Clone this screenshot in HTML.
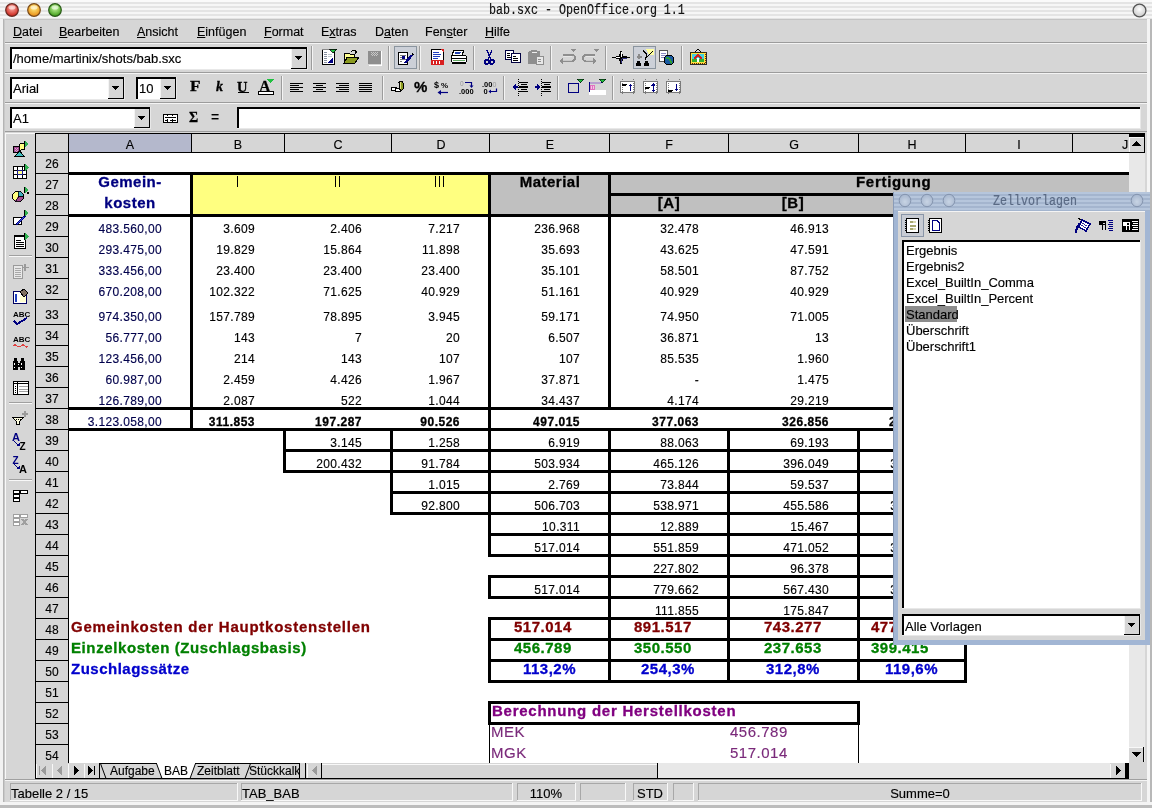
<!DOCTYPE html>
<html><head><meta charset="utf-8"><style>
html,body{margin:0;padding:0;width:1152px;height:808px;overflow:hidden;background:#d6d6d6}
body>div,body>svg{position:absolute}
.t{white-space:pre;line-height:normal;will-change:transform;-webkit-text-stroke:0.15px currentColor}
.t[style*="font-weight:bold"]{-webkit-text-stroke:0.3px currentColor}
u{text-decoration:underline;text-underline-offset:1px}
</style></head><body>
<div style="left:0px;top:0px;width:1152px;height:808px;background:#d6d6d6"></div>
<div style="left:0px;top:0px;width:1152px;height:19px;background:repeating-linear-gradient(to bottom,#f6f6f6 0px,#f6f6f6 2px,#e4e4e4 2px,#e4e4e4 4px)"></div>
<div style="left:0px;top:0px;width:1152px;height:2px;background:#fafafa"></div>
<div style="left:0px;top:19px;width:1152px;height:1px;background:#c4c4c4"></div>
<div style="left:0px;top:19px;width:3px;height:789px;background:#f2f2f2"></div>
<div style="left:3px;top:19px;width:1px;height:789px;background:#b4b4b4"></div>
<div style="left:4px;top:19px;width:1px;height:789px;background:#c8c8c8"></div>
<div style="left:1147px;top:19px;width:3px;height:789px;background:#f4f4f4"></div>
<div style="left:1150px;top:19px;width:2px;height:789px;background:#b8b8b8"></div>
<div style="left:0px;top:802px;width:1152px;height:3px;background:#f4f4f4"></div>
<div style="left:0px;top:805px;width:1152px;height:3px;background:#bcbcbc"></div>
<div class="t" style="left:489px;top:4px;font-size:11.67px;font-weight:normal;color:#111;font-family:'Liberation Mono';transform:scaleY(1.18);transform-origin:0 11px">bab.sxc - OpenOffice.org 1.1</div>
<svg style="position:absolute;left:4px;top:2px;" width="16" height="16" viewBox="0 0 16 16"><defs><radialGradient id="g12" cx="50%" cy="35%" r="65%"><stop offset="0%" stop-color="#ffb0a8"/><stop offset="100%" stop-color="#c81e14"/></radialGradient></defs><circle cx="8" cy="8" r="6.3" fill="url(#g12)" stroke="#6a2a22" stroke-width="1.2"/><ellipse cx="8" cy="5.5" rx="3.5" ry="2" fill="#fff" opacity="0.55"/></svg>
<svg style="position:absolute;left:26px;top:2px;" width="16" height="16" viewBox="0 0 16 16"><defs><radialGradient id="g34" cx="50%" cy="35%" r="65%"><stop offset="0%" stop-color="#ffee80"/><stop offset="100%" stop-color="#e88a10"/></radialGradient></defs><circle cx="8" cy="8" r="6.3" fill="url(#g34)" stroke="#7a4a18" stroke-width="1.2"/><ellipse cx="8" cy="5.5" rx="3.5" ry="2" fill="#fff" opacity="0.55"/></svg>
<svg style="position:absolute;left:47px;top:2px;" width="16" height="16" viewBox="0 0 16 16"><defs><radialGradient id="g55" cx="50%" cy="35%" r="65%"><stop offset="0%" stop-color="#c8f8a0"/><stop offset="100%" stop-color="#3a9a14"/></radialGradient></defs><circle cx="8" cy="8" r="6.3" fill="url(#g55)" stroke="#2a5a18" stroke-width="1.2"/><ellipse cx="8" cy="5.5" rx="3.5" ry="2" fill="#fff" opacity="0.55"/></svg>
<svg style="position:absolute;left:1131px;top:2px;" width="17" height="17" viewBox="0 0 17 17"><defs><radialGradient id="gw" cx="50%" cy="40%" r="60%"><stop offset="0%" stop-color="#ffffff"/><stop offset="100%" stop-color="#c8c8c8"/></radialGradient></defs><circle cx="8.5" cy="8.5" r="6.4" fill="url(#gw)" stroke="#555" stroke-width="1.3"/></svg>
<div class="t" style="left:13px;top:25px;font-size:12.5px;font-weight:normal;color:#000;font-family:'Liberation Sans';"><u>D</u>atei</div>
<div class="t" style="left:59px;top:25px;font-size:12.5px;font-weight:normal;color:#000;font-family:'Liberation Sans';"><u>B</u>earbeiten</div>
<div class="t" style="left:137px;top:25px;font-size:12.5px;font-weight:normal;color:#000;font-family:'Liberation Sans';"><u>A</u>nsicht</div>
<div class="t" style="left:197px;top:25px;font-size:12.5px;font-weight:normal;color:#000;font-family:'Liberation Sans';"><u>E</u>infügen</div>
<div class="t" style="left:264px;top:25px;font-size:12.5px;font-weight:normal;color:#000;font-family:'Liberation Sans';"><u>F</u>ormat</div>
<div class="t" style="left:321px;top:25px;font-size:12.5px;font-weight:normal;color:#000;font-family:'Liberation Sans';">E<u>x</u>tras</div>
<div class="t" style="left:375px;top:25px;font-size:12.5px;font-weight:normal;color:#000;font-family:'Liberation Sans';">D<u>a</u>ten</div>
<div class="t" style="left:425px;top:25px;font-size:12.5px;font-weight:normal;color:#000;font-family:'Liberation Sans';">Fen<u>s</u>ter</div>
<div class="t" style="left:485px;top:25px;font-size:12.5px;font-weight:normal;color:#000;font-family:'Liberation Sans';"><u>H</u>ilfe</div>
<div style="left:5px;top:42px;width:1142px;height:1px;background:#9c9c9c"></div>
<div style="left:5px;top:43px;width:1142px;height:1px;background:#f4f4f4"></div>
<div style="left:5px;top:72px;width:1142px;height:1px;background:#9c9c9c"></div>
<div style="left:5px;top:73px;width:1142px;height:1px;background:#f4f4f4"></div>
<div style="left:5px;top:102px;width:1142px;height:1px;background:#9c9c9c"></div>
<div style="left:5px;top:103px;width:1142px;height:1px;background:#f4f4f4"></div>
<div style="left:5px;top:131px;width:1142px;height:1px;background:#9c9c9c"></div>
<div style="left:10px;top:47px;width:298px;height:23px;background:#fff"></div>
<div style="left:10px;top:47px;width:298px;height:2px;background:#000"></div>
<div style="left:10px;top:47px;width:2px;height:23px;background:#000"></div>
<div style="left:10px;top:69px;width:298px;height:1px;background:#e8e8e8"></div>
<div style="left:307px;top:47px;width:1px;height:23px;background:#e8e8e8"></div>
<div style="left:291px;top:49px;width:16px;height:20px;background:#d6d6d6"></div>
<div style="left:291px;top:49px;width:1px;height:20px;background:#f4f4f4"></div>
<div style="left:291px;top:68px;width:16px;height:1px;background:#000"></div>
<div style="left:306px;top:49px;width:1px;height:20px;background:#000"></div>
<svg style="position:absolute;left:295px;top:56px;" width="8" height="5" viewBox="0 0 8 5" shape-rendering="crispEdges"><path d="M0 0H7L3.5 4Z" fill="#000"/></svg>
<div class="t" style="left:13px;top:51px;font-size:13px;font-weight:normal;color:#000;font-family:'Liberation Sans';">/home/martinix/shots/bab.sxc</div>
<div style="left:311px;top:46px;width:1px;height:24px;background:#9c9c9c"></div>
<div style="left:312px;top:46px;width:1px;height:24px;background:#f4f4f4"></div>
<div style="left:388px;top:46px;width:1px;height:24px;background:#9c9c9c"></div>
<div style="left:389px;top:46px;width:1px;height:24px;background:#f4f4f4"></div>
<div style="left:419px;top:46px;width:1px;height:24px;background:#9c9c9c"></div>
<div style="left:420px;top:46px;width:1px;height:24px;background:#f4f4f4"></div>
<div style="left:473px;top:46px;width:1px;height:24px;background:#9c9c9c"></div>
<div style="left:474px;top:46px;width:1px;height:24px;background:#f4f4f4"></div>
<div style="left:550px;top:46px;width:1px;height:24px;background:#9c9c9c"></div>
<div style="left:551px;top:46px;width:1px;height:24px;background:#f4f4f4"></div>
<div style="left:605px;top:46px;width:1px;height:24px;background:#9c9c9c"></div>
<div style="left:606px;top:46px;width:1px;height:24px;background:#f4f4f4"></div>
<div style="left:681px;top:46px;width:1px;height:24px;background:#9c9c9c"></div>
<div style="left:682px;top:46px;width:1px;height:24px;background:#f4f4f4"></div>
<div style="left:10px;top:77px;width:115px;height:23px;background:#fff"></div>
<div style="left:10px;top:77px;width:115px;height:2px;background:#000"></div>
<div style="left:10px;top:77px;width:2px;height:23px;background:#000"></div>
<div style="left:10px;top:99px;width:115px;height:1px;background:#e8e8e8"></div>
<div style="left:124px;top:77px;width:1px;height:23px;background:#e8e8e8"></div>
<div style="left:108px;top:79px;width:16px;height:20px;background:#d6d6d6"></div>
<div style="left:108px;top:79px;width:1px;height:20px;background:#f4f4f4"></div>
<div style="left:108px;top:98px;width:16px;height:1px;background:#000"></div>
<div style="left:123px;top:79px;width:1px;height:20px;background:#000"></div>
<svg style="position:absolute;left:112px;top:86px;" width="8" height="5" viewBox="0 0 8 5" shape-rendering="crispEdges"><path d="M0 0H7L3.5 4Z" fill="#000"/></svg>
<div class="t" style="left:13px;top:81px;font-size:13px;font-weight:normal;color:#000;font-family:'Liberation Sans';">Arial</div>
<div style="left:136px;top:77px;width:41px;height:23px;background:#fff"></div>
<div style="left:136px;top:77px;width:41px;height:2px;background:#000"></div>
<div style="left:136px;top:77px;width:2px;height:23px;background:#000"></div>
<div style="left:136px;top:99px;width:41px;height:1px;background:#e8e8e8"></div>
<div style="left:176px;top:77px;width:1px;height:23px;background:#e8e8e8"></div>
<div style="left:160px;top:79px;width:16px;height:20px;background:#d6d6d6"></div>
<div style="left:160px;top:79px;width:1px;height:20px;background:#f4f4f4"></div>
<div style="left:160px;top:98px;width:16px;height:1px;background:#000"></div>
<div style="left:175px;top:79px;width:1px;height:20px;background:#000"></div>
<svg style="position:absolute;left:164px;top:86px;" width="8" height="5" viewBox="0 0 8 5" shape-rendering="crispEdges"><path d="M0 0H7L3.5 4Z" fill="#000"/></svg>
<div class="t" style="left:139px;top:81px;font-size:13px;font-weight:normal;color:#000;font-family:'Liberation Sans';">10</div>
<div style="left:281px;top:76px;width:1px;height:24px;background:#9c9c9c"></div>
<div style="left:282px;top:76px;width:1px;height:24px;background:#f4f4f4"></div>
<div style="left:382px;top:76px;width:1px;height:24px;background:#9c9c9c"></div>
<div style="left:383px;top:76px;width:1px;height:24px;background:#f4f4f4"></div>
<div style="left:503px;top:76px;width:1px;height:24px;background:#9c9c9c"></div>
<div style="left:504px;top:76px;width:1px;height:24px;background:#f4f4f4"></div>
<div style="left:557px;top:76px;width:1px;height:24px;background:#9c9c9c"></div>
<div style="left:558px;top:76px;width:1px;height:24px;background:#f4f4f4"></div>
<div style="left:612px;top:76px;width:1px;height:24px;background:#9c9c9c"></div>
<div style="left:613px;top:76px;width:1px;height:24px;background:#f4f4f4"></div>
<div style="left:10px;top:107px;width:141px;height:22px;background:#fff"></div>
<div style="left:10px;top:107px;width:141px;height:2px;background:#000"></div>
<div style="left:10px;top:107px;width:2px;height:22px;background:#000"></div>
<div style="left:10px;top:128px;width:141px;height:1px;background:#e8e8e8"></div>
<div style="left:150px;top:107px;width:1px;height:22px;background:#e8e8e8"></div>
<div style="left:134px;top:109px;width:16px;height:19px;background:#d6d6d6"></div>
<div style="left:134px;top:109px;width:1px;height:19px;background:#f4f4f4"></div>
<div style="left:134px;top:127px;width:16px;height:1px;background:#000"></div>
<div style="left:149px;top:109px;width:1px;height:19px;background:#000"></div>
<svg style="position:absolute;left:138px;top:116px;" width="8" height="5" viewBox="0 0 8 5" shape-rendering="crispEdges"><path d="M0 0H7L3.5 4Z" fill="#000"/></svg>
<div class="t" style="left:13px;top:111px;font-size:13px;font-weight:normal;color:#000;font-family:'Liberation Sans';">A1</div>
<div style="left:237px;top:107px;width:904px;height:22px;background:#fff"></div>
<div style="left:237px;top:107px;width:904px;height:2px;background:#000"></div>
<div style="left:237px;top:107px;width:2px;height:22px;background:#000"></div>
<div style="left:237px;top:128px;width:904px;height:1px;background:#e8e8e8"></div>
<div style="left:1140px;top:107px;width:1px;height:22px;background:#e8e8e8"></div>
<div style="left:5px;top:133px;width:30px;height:646px;background:#d6d6d6"></div>
<div style="left:5px;top:133px;width:1px;height:646px;background:#f8f8f8"></div>
<div style="left:5px;top:133px;width:30px;height:1px;background:#f8f8f8"></div>
<div style="left:5px;top:779px;width:1142px;height:1px;background:#a0a0a0"></div>
<div style="left:5px;top:780px;width:1142px;height:1px;background:#f4f4f4"></div>
<div style="left:9px;top:255px;width:23px;height:1px;background:#a0a0a0"></div>
<div style="left:9px;top:256px;width:23px;height:1px;background:#f8f8f8"></div>
<div style="left:9px;top:402px;width:23px;height:1px;background:#a0a0a0"></div>
<div style="left:9px;top:403px;width:23px;height:1px;background:#f8f8f8"></div>
<div style="left:9px;top:479px;width:23px;height:1px;background:#a0a0a0"></div>
<div style="left:9px;top:480px;width:23px;height:1px;background:#f8f8f8"></div>
<div style="left:69px;top:153px;width:1060px;height:610px;background:#fff"></div>
<div style="left:35px;top:133px;width:1094px;height:20px;background:#d6d6d6"></div>
<div style="left:69px;top:134px;width:122px;height:18px;background:#b4b8cc"></div>
<div style="left:35px;top:133px;width:1110px;height:1px;background:#000"></div>
<div style="left:35px;top:152px;width:1094px;height:1px;background:#000"></div>
<div style="left:68px;top:133px;width:1px;height:20px;background:#000"></div>
<div style="left:191px;top:133px;width:1px;height:20px;background:#000"></div>
<div style="left:284px;top:133px;width:1px;height:20px;background:#000"></div>
<div style="left:391px;top:133px;width:1px;height:20px;background:#000"></div>
<div style="left:489px;top:133px;width:1px;height:20px;background:#000"></div>
<div style="left:609px;top:133px;width:1px;height:20px;background:#000"></div>
<div style="left:728px;top:133px;width:1px;height:20px;background:#000"></div>
<div style="left:858px;top:133px;width:1px;height:20px;background:#000"></div>
<div style="left:965px;top:133px;width:1px;height:20px;background:#000"></div>
<div style="left:1072px;top:133px;width:1px;height:20px;background:#000"></div>
<div class="t" style="left:-20px;top:138px;width:300px;text-align:center;font-size:12.5px;font-weight:normal;color:#000;font-family:'Liberation Sans';">A</div>
<div class="t" style="left:88px;top:138px;width:300px;text-align:center;font-size:12.5px;font-weight:normal;color:#000;font-family:'Liberation Sans';">B</div>
<div class="t" style="left:188px;top:138px;width:300px;text-align:center;font-size:12.5px;font-weight:normal;color:#000;font-family:'Liberation Sans';">C</div>
<div class="t" style="left:291px;top:138px;width:300px;text-align:center;font-size:12.5px;font-weight:normal;color:#000;font-family:'Liberation Sans';">D</div>
<div class="t" style="left:400px;top:138px;width:300px;text-align:center;font-size:12.5px;font-weight:normal;color:#000;font-family:'Liberation Sans';">E</div>
<div class="t" style="left:519px;top:138px;width:300px;text-align:center;font-size:12.5px;font-weight:normal;color:#000;font-family:'Liberation Sans';">F</div>
<div class="t" style="left:644px;top:138px;width:300px;text-align:center;font-size:12.5px;font-weight:normal;color:#000;font-family:'Liberation Sans';">G</div>
<div class="t" style="left:762px;top:138px;width:300px;text-align:center;font-size:12.5px;font-weight:normal;color:#000;font-family:'Liberation Sans';">H</div>
<div class="t" style="left:869px;top:138px;width:300px;text-align:center;font-size:12.5px;font-weight:normal;color:#000;font-family:'Liberation Sans';">I</div>
<div class="t" style="left:1122px;top:138px;font-size:12.5px;font-weight:normal;color:#000;font-family:'Liberation Sans';">J</div>
<div style="left:35px;top:153px;width:34px;height:610px;background:#d6d6d6"></div>
<div style="left:35px;top:133px;width:1px;height:630px;background:#000"></div>
<div style="left:68px;top:153px;width:1px;height:610px;background:#000"></div>
<div style="left:35px;top:173px;width:34px;height:1px;background:#000"></div>
<div style="left:35px;top:194px;width:34px;height:1px;background:#000"></div>
<div style="left:35px;top:215px;width:34px;height:1px;background:#000"></div>
<div style="left:35px;top:236px;width:34px;height:1px;background:#000"></div>
<div style="left:35px;top:257px;width:34px;height:1px;background:#000"></div>
<div style="left:35px;top:278px;width:34px;height:1px;background:#000"></div>
<div style="left:35px;top:299px;width:34px;height:1px;background:#000"></div>
<div style="left:35px;top:324px;width:34px;height:1px;background:#000"></div>
<div style="left:35px;top:345px;width:34px;height:1px;background:#000"></div>
<div style="left:35px;top:366px;width:34px;height:1px;background:#000"></div>
<div style="left:35px;top:387px;width:34px;height:1px;background:#000"></div>
<div style="left:35px;top:408px;width:34px;height:1px;background:#000"></div>
<div style="left:35px;top:429px;width:34px;height:1px;background:#000"></div>
<div style="left:35px;top:450px;width:34px;height:1px;background:#000"></div>
<div style="left:35px;top:471px;width:34px;height:1px;background:#000"></div>
<div style="left:35px;top:492px;width:34px;height:1px;background:#000"></div>
<div style="left:35px;top:513px;width:34px;height:1px;background:#000"></div>
<div style="left:35px;top:534px;width:34px;height:1px;background:#000"></div>
<div style="left:35px;top:555px;width:34px;height:1px;background:#000"></div>
<div style="left:35px;top:576px;width:34px;height:1px;background:#000"></div>
<div style="left:35px;top:597px;width:34px;height:1px;background:#000"></div>
<div style="left:35px;top:618px;width:34px;height:1px;background:#000"></div>
<div style="left:35px;top:639px;width:34px;height:1px;background:#000"></div>
<div style="left:35px;top:660px;width:34px;height:1px;background:#000"></div>
<div style="left:35px;top:681px;width:34px;height:1px;background:#000"></div>
<div style="left:35px;top:702px;width:34px;height:1px;background:#000"></div>
<div style="left:35px;top:723px;width:34px;height:1px;background:#000"></div>
<div style="left:35px;top:744px;width:34px;height:1px;background:#000"></div>
<div class="t" style="left:-98px;top:157px;width:300px;text-align:center;font-size:12px;font-weight:normal;color:#000;font-family:'Liberation Sans';">26</div>
<div class="t" style="left:-98px;top:178px;width:300px;text-align:center;font-size:12px;font-weight:normal;color:#000;font-family:'Liberation Sans';">27</div>
<div class="t" style="left:-98px;top:199px;width:300px;text-align:center;font-size:12px;font-weight:normal;color:#000;font-family:'Liberation Sans';">28</div>
<div class="t" style="left:-98px;top:220px;width:300px;text-align:center;font-size:12px;font-weight:normal;color:#000;font-family:'Liberation Sans';">29</div>
<div class="t" style="left:-98px;top:241px;width:300px;text-align:center;font-size:12px;font-weight:normal;color:#000;font-family:'Liberation Sans';">30</div>
<div class="t" style="left:-98px;top:262px;width:300px;text-align:center;font-size:12px;font-weight:normal;color:#000;font-family:'Liberation Sans';">31</div>
<div class="t" style="left:-98px;top:283px;width:300px;text-align:center;font-size:12px;font-weight:normal;color:#000;font-family:'Liberation Sans';">32</div>
<div class="t" style="left:-98px;top:308px;width:300px;text-align:center;font-size:12px;font-weight:normal;color:#000;font-family:'Liberation Sans';">33</div>
<div class="t" style="left:-98px;top:329px;width:300px;text-align:center;font-size:12px;font-weight:normal;color:#000;font-family:'Liberation Sans';">34</div>
<div class="t" style="left:-98px;top:350px;width:300px;text-align:center;font-size:12px;font-weight:normal;color:#000;font-family:'Liberation Sans';">35</div>
<div class="t" style="left:-98px;top:371px;width:300px;text-align:center;font-size:12px;font-weight:normal;color:#000;font-family:'Liberation Sans';">36</div>
<div class="t" style="left:-98px;top:392px;width:300px;text-align:center;font-size:12px;font-weight:normal;color:#000;font-family:'Liberation Sans';">37</div>
<div class="t" style="left:-98px;top:413px;width:300px;text-align:center;font-size:12px;font-weight:normal;color:#000;font-family:'Liberation Sans';">38</div>
<div class="t" style="left:-98px;top:434px;width:300px;text-align:center;font-size:12px;font-weight:normal;color:#000;font-family:'Liberation Sans';">39</div>
<div class="t" style="left:-98px;top:455px;width:300px;text-align:center;font-size:12px;font-weight:normal;color:#000;font-family:'Liberation Sans';">40</div>
<div class="t" style="left:-98px;top:476px;width:300px;text-align:center;font-size:12px;font-weight:normal;color:#000;font-family:'Liberation Sans';">41</div>
<div class="t" style="left:-98px;top:497px;width:300px;text-align:center;font-size:12px;font-weight:normal;color:#000;font-family:'Liberation Sans';">42</div>
<div class="t" style="left:-98px;top:518px;width:300px;text-align:center;font-size:12px;font-weight:normal;color:#000;font-family:'Liberation Sans';">43</div>
<div class="t" style="left:-98px;top:539px;width:300px;text-align:center;font-size:12px;font-weight:normal;color:#000;font-family:'Liberation Sans';">44</div>
<div class="t" style="left:-98px;top:560px;width:300px;text-align:center;font-size:12px;font-weight:normal;color:#000;font-family:'Liberation Sans';">45</div>
<div class="t" style="left:-98px;top:581px;width:300px;text-align:center;font-size:12px;font-weight:normal;color:#000;font-family:'Liberation Sans';">46</div>
<div class="t" style="left:-98px;top:602px;width:300px;text-align:center;font-size:12px;font-weight:normal;color:#000;font-family:'Liberation Sans';">47</div>
<div class="t" style="left:-98px;top:623px;width:300px;text-align:center;font-size:12px;font-weight:normal;color:#000;font-family:'Liberation Sans';">48</div>
<div class="t" style="left:-98px;top:644px;width:300px;text-align:center;font-size:12px;font-weight:normal;color:#000;font-family:'Liberation Sans';">49</div>
<div class="t" style="left:-98px;top:665px;width:300px;text-align:center;font-size:12px;font-weight:normal;color:#000;font-family:'Liberation Sans';">50</div>
<div class="t" style="left:-98px;top:686px;width:300px;text-align:center;font-size:12px;font-weight:normal;color:#000;font-family:'Liberation Sans';">51</div>
<div class="t" style="left:-98px;top:707px;width:300px;text-align:center;font-size:12px;font-weight:normal;color:#000;font-family:'Liberation Sans';">52</div>
<div class="t" style="left:-98px;top:728px;width:300px;text-align:center;font-size:12px;font-weight:normal;color:#000;font-family:'Liberation Sans';">53</div>
<div class="t" style="left:-98px;top:749px;width:300px;text-align:center;font-size:12px;font-weight:normal;color:#000;font-family:'Liberation Sans';">54</div>
<div style="left:1129px;top:133px;width:16px;height:630px;background:#e8e8e8"></div>
<div style="left:1129px;top:133px;width:16px;height:4px;background:#000"></div>
<div style="left:1129px;top:137px;width:15px;height:15px;background:#d6d6d6"></div>
<div style="left:1129px;top:137px;width:15px;height:1px;background:#f8f8f8"></div>
<div style="left:1129px;top:137px;width:1px;height:15px;background:#f8f8f8"></div>
<div style="left:1144px;top:133px;width:1px;height:20px;background:#000"></div>
<div style="left:1129px;top:152px;width:16px;height:1px;background:#000"></div>
<svg style="position:absolute;left:1132px;top:141px;" width="10" height="6" viewBox="0 0 10 6" shape-rendering="crispEdges"><path d="M0 5H9L4.5 0Z" fill="#000"/></svg>
<div style="left:1129px;top:747px;width:15px;height:15px;background:#d6d6d6"></div>
<div style="left:1129px;top:747px;width:15px;height:1px;background:#f8f8f8"></div>
<div style="left:1143px;top:747px;width:1px;height:16px;background:#000"></div>
<div style="left:1129px;top:762px;width:16px;height:1px;background:#000"></div>
<svg style="position:absolute;left:1132px;top:752px;" width="10" height="6" viewBox="0 0 10 6" shape-rendering="crispEdges"><path d="M0 0H9L4.5 5Z" fill="#000"/></svg>
<div style="left:192px;top:174px;width:297px;height:41px;background:#ffff80"></div>
<div style="left:490px;top:174px;width:639px;height:41px;background:#c0c0c0"></div>
<div class="t" style="left:-20px;top:173px;width:300px;text-align:center;font-size:15px;font-weight:bold;color:#000080;font-family:'Liberation Sans';letter-spacing:0.5px">Gemein-</div>
<div class="t" style="left:-20px;top:194px;width:300px;text-align:center;font-size:15px;font-weight:bold;color:#000080;font-family:'Liberation Sans';letter-spacing:0.5px">kosten</div>
<div style="left:237px;top:176px;width:1px;height:11px;background:#000"></div>
<div style="left:335px;top:176px;width:1px;height:11px;background:#000"></div>
<div style="left:339px;top:176px;width:1px;height:11px;background:#000"></div>
<div style="left:435px;top:176px;width:1px;height:11px;background:#000"></div>
<div style="left:439px;top:176px;width:1px;height:11px;background:#000"></div>
<div style="left:443px;top:176px;width:1px;height:11px;background:#000"></div>
<div class="t" style="left:400px;top:173px;width:300px;text-align:center;font-size:15px;font-weight:bold;color:#000;font-family:'Liberation Sans';letter-spacing:0.5px">Material</div>
<div class="t" style="left:856px;top:173px;font-size:15px;font-weight:bold;color:#000;font-family:'Liberation Sans';letter-spacing:0.7px">Fertigung</div>
<div class="t" style="left:519px;top:194px;width:300px;text-align:center;font-size:15px;font-weight:bold;color:#000;font-family:'Liberation Sans';letter-spacing:0.5px">[A]</div>
<div class="t" style="left:643px;top:194px;width:300px;text-align:center;font-size:15px;font-weight:bold;color:#000;font-family:'Liberation Sans';letter-spacing:0.5px">[B]</div>
<div style="left:68px;top:172px;width:1061px;height:3px;background:#000"></div>
<div style="left:68px;top:214px;width:1061px;height:3px;background:#000"></div>
<div style="left:608px;top:193px;width:521px;height:3px;background:#000"></div>
<div style="left:190px;top:172px;width:3px;height:45px;background:#000"></div>
<div style="left:488px;top:172px;width:3px;height:45px;background:#000"></div>
<div style="left:608px;top:172px;width:3px;height:45px;background:#000"></div>
<div class="t" style="left:-138px;top:222px;width:300px;text-align:right;font-size:12px;font-weight:normal;color:#00004c;font-family:'Liberation Sans';letter-spacing:0.35px">483.560,00</div>
<div class="t" style="left:-45px;top:222px;width:300px;text-align:right;font-size:12px;font-weight:normal;color:#000;font-family:'Liberation Sans';letter-spacing:0.35px">3.609</div>
<div class="t" style="left:62px;top:222px;width:300px;text-align:right;font-size:12px;font-weight:normal;color:#000;font-family:'Liberation Sans';letter-spacing:0.35px">2.406</div>
<div class="t" style="left:160px;top:222px;width:300px;text-align:right;font-size:12px;font-weight:normal;color:#000;font-family:'Liberation Sans';letter-spacing:0.35px">7.217</div>
<div class="t" style="left:280px;top:222px;width:300px;text-align:right;font-size:12px;font-weight:normal;color:#000;font-family:'Liberation Sans';letter-spacing:0.35px">236.968</div>
<div class="t" style="left:399px;top:222px;width:300px;text-align:right;font-size:12px;font-weight:normal;color:#000;font-family:'Liberation Sans';letter-spacing:0.35px">32.478</div>
<div class="t" style="left:529px;top:222px;width:300px;text-align:right;font-size:12px;font-weight:normal;color:#000;font-family:'Liberation Sans';letter-spacing:0.35px">46.913</div>
<div class="t" style="left:-138px;top:243px;width:300px;text-align:right;font-size:12px;font-weight:normal;color:#00004c;font-family:'Liberation Sans';letter-spacing:0.35px">293.475,00</div>
<div class="t" style="left:-45px;top:243px;width:300px;text-align:right;font-size:12px;font-weight:normal;color:#000;font-family:'Liberation Sans';letter-spacing:0.35px">19.829</div>
<div class="t" style="left:62px;top:243px;width:300px;text-align:right;font-size:12px;font-weight:normal;color:#000;font-family:'Liberation Sans';letter-spacing:0.35px">15.864</div>
<div class="t" style="left:160px;top:243px;width:300px;text-align:right;font-size:12px;font-weight:normal;color:#000;font-family:'Liberation Sans';letter-spacing:0.35px">11.898</div>
<div class="t" style="left:280px;top:243px;width:300px;text-align:right;font-size:12px;font-weight:normal;color:#000;font-family:'Liberation Sans';letter-spacing:0.35px">35.693</div>
<div class="t" style="left:399px;top:243px;width:300px;text-align:right;font-size:12px;font-weight:normal;color:#000;font-family:'Liberation Sans';letter-spacing:0.35px">43.625</div>
<div class="t" style="left:529px;top:243px;width:300px;text-align:right;font-size:12px;font-weight:normal;color:#000;font-family:'Liberation Sans';letter-spacing:0.35px">47.591</div>
<div class="t" style="left:-138px;top:264px;width:300px;text-align:right;font-size:12px;font-weight:normal;color:#00004c;font-family:'Liberation Sans';letter-spacing:0.35px">333.456,00</div>
<div class="t" style="left:-45px;top:264px;width:300px;text-align:right;font-size:12px;font-weight:normal;color:#000;font-family:'Liberation Sans';letter-spacing:0.35px">23.400</div>
<div class="t" style="left:62px;top:264px;width:300px;text-align:right;font-size:12px;font-weight:normal;color:#000;font-family:'Liberation Sans';letter-spacing:0.35px">23.400</div>
<div class="t" style="left:160px;top:264px;width:300px;text-align:right;font-size:12px;font-weight:normal;color:#000;font-family:'Liberation Sans';letter-spacing:0.35px">23.400</div>
<div class="t" style="left:280px;top:264px;width:300px;text-align:right;font-size:12px;font-weight:normal;color:#000;font-family:'Liberation Sans';letter-spacing:0.35px">35.101</div>
<div class="t" style="left:399px;top:264px;width:300px;text-align:right;font-size:12px;font-weight:normal;color:#000;font-family:'Liberation Sans';letter-spacing:0.35px">58.501</div>
<div class="t" style="left:529px;top:264px;width:300px;text-align:right;font-size:12px;font-weight:normal;color:#000;font-family:'Liberation Sans';letter-spacing:0.35px">87.752</div>
<div class="t" style="left:-138px;top:285px;width:300px;text-align:right;font-size:12px;font-weight:normal;color:#00004c;font-family:'Liberation Sans';letter-spacing:0.35px">670.208,00</div>
<div class="t" style="left:-45px;top:285px;width:300px;text-align:right;font-size:12px;font-weight:normal;color:#000;font-family:'Liberation Sans';letter-spacing:0.35px">102.322</div>
<div class="t" style="left:62px;top:285px;width:300px;text-align:right;font-size:12px;font-weight:normal;color:#000;font-family:'Liberation Sans';letter-spacing:0.35px">71.625</div>
<div class="t" style="left:160px;top:285px;width:300px;text-align:right;font-size:12px;font-weight:normal;color:#000;font-family:'Liberation Sans';letter-spacing:0.35px">40.929</div>
<div class="t" style="left:280px;top:285px;width:300px;text-align:right;font-size:12px;font-weight:normal;color:#000;font-family:'Liberation Sans';letter-spacing:0.35px">51.161</div>
<div class="t" style="left:399px;top:285px;width:300px;text-align:right;font-size:12px;font-weight:normal;color:#000;font-family:'Liberation Sans';letter-spacing:0.35px">40.929</div>
<div class="t" style="left:529px;top:285px;width:300px;text-align:right;font-size:12px;font-weight:normal;color:#000;font-family:'Liberation Sans';letter-spacing:0.35px">40.929</div>
<div class="t" style="left:-138px;top:310px;width:300px;text-align:right;font-size:12px;font-weight:normal;color:#00004c;font-family:'Liberation Sans';letter-spacing:0.35px">974.350,00</div>
<div class="t" style="left:-45px;top:310px;width:300px;text-align:right;font-size:12px;font-weight:normal;color:#000;font-family:'Liberation Sans';letter-spacing:0.35px">157.789</div>
<div class="t" style="left:62px;top:310px;width:300px;text-align:right;font-size:12px;font-weight:normal;color:#000;font-family:'Liberation Sans';letter-spacing:0.35px">78.895</div>
<div class="t" style="left:160px;top:310px;width:300px;text-align:right;font-size:12px;font-weight:normal;color:#000;font-family:'Liberation Sans';letter-spacing:0.35px">3.945</div>
<div class="t" style="left:280px;top:310px;width:300px;text-align:right;font-size:12px;font-weight:normal;color:#000;font-family:'Liberation Sans';letter-spacing:0.35px">59.171</div>
<div class="t" style="left:399px;top:310px;width:300px;text-align:right;font-size:12px;font-weight:normal;color:#000;font-family:'Liberation Sans';letter-spacing:0.35px">74.950</div>
<div class="t" style="left:529px;top:310px;width:300px;text-align:right;font-size:12px;font-weight:normal;color:#000;font-family:'Liberation Sans';letter-spacing:0.35px">71.005</div>
<div class="t" style="left:-138px;top:331px;width:300px;text-align:right;font-size:12px;font-weight:normal;color:#00004c;font-family:'Liberation Sans';letter-spacing:0.35px">56.777,00</div>
<div class="t" style="left:-45px;top:331px;width:300px;text-align:right;font-size:12px;font-weight:normal;color:#000;font-family:'Liberation Sans';letter-spacing:0.35px">143</div>
<div class="t" style="left:62px;top:331px;width:300px;text-align:right;font-size:12px;font-weight:normal;color:#000;font-family:'Liberation Sans';letter-spacing:0.35px">7</div>
<div class="t" style="left:160px;top:331px;width:300px;text-align:right;font-size:12px;font-weight:normal;color:#000;font-family:'Liberation Sans';letter-spacing:0.35px">20</div>
<div class="t" style="left:280px;top:331px;width:300px;text-align:right;font-size:12px;font-weight:normal;color:#000;font-family:'Liberation Sans';letter-spacing:0.35px">6.507</div>
<div class="t" style="left:399px;top:331px;width:300px;text-align:right;font-size:12px;font-weight:normal;color:#000;font-family:'Liberation Sans';letter-spacing:0.35px">36.871</div>
<div class="t" style="left:529px;top:331px;width:300px;text-align:right;font-size:12px;font-weight:normal;color:#000;font-family:'Liberation Sans';letter-spacing:0.35px">13</div>
<div class="t" style="left:-138px;top:352px;width:300px;text-align:right;font-size:12px;font-weight:normal;color:#00004c;font-family:'Liberation Sans';letter-spacing:0.35px">123.456,00</div>
<div class="t" style="left:-45px;top:352px;width:300px;text-align:right;font-size:12px;font-weight:normal;color:#000;font-family:'Liberation Sans';letter-spacing:0.35px">214</div>
<div class="t" style="left:62px;top:352px;width:300px;text-align:right;font-size:12px;font-weight:normal;color:#000;font-family:'Liberation Sans';letter-spacing:0.35px">143</div>
<div class="t" style="left:160px;top:352px;width:300px;text-align:right;font-size:12px;font-weight:normal;color:#000;font-family:'Liberation Sans';letter-spacing:0.35px">107</div>
<div class="t" style="left:280px;top:352px;width:300px;text-align:right;font-size:12px;font-weight:normal;color:#000;font-family:'Liberation Sans';letter-spacing:0.35px">107</div>
<div class="t" style="left:399px;top:352px;width:300px;text-align:right;font-size:12px;font-weight:normal;color:#000;font-family:'Liberation Sans';letter-spacing:0.35px">85.535</div>
<div class="t" style="left:529px;top:352px;width:300px;text-align:right;font-size:12px;font-weight:normal;color:#000;font-family:'Liberation Sans';letter-spacing:0.35px">1.960</div>
<div class="t" style="left:-138px;top:373px;width:300px;text-align:right;font-size:12px;font-weight:normal;color:#00004c;font-family:'Liberation Sans';letter-spacing:0.35px">60.987,00</div>
<div class="t" style="left:-45px;top:373px;width:300px;text-align:right;font-size:12px;font-weight:normal;color:#000;font-family:'Liberation Sans';letter-spacing:0.35px">2.459</div>
<div class="t" style="left:62px;top:373px;width:300px;text-align:right;font-size:12px;font-weight:normal;color:#000;font-family:'Liberation Sans';letter-spacing:0.35px">4.426</div>
<div class="t" style="left:160px;top:373px;width:300px;text-align:right;font-size:12px;font-weight:normal;color:#000;font-family:'Liberation Sans';letter-spacing:0.35px">1.967</div>
<div class="t" style="left:280px;top:373px;width:300px;text-align:right;font-size:12px;font-weight:normal;color:#000;font-family:'Liberation Sans';letter-spacing:0.35px">37.871</div>
<div class="t" style="left:399px;top:373px;width:300px;text-align:right;font-size:12px;font-weight:normal;color:#000;font-family:'Liberation Sans';letter-spacing:0.35px">-</div>
<div class="t" style="left:529px;top:373px;width:300px;text-align:right;font-size:12px;font-weight:normal;color:#000;font-family:'Liberation Sans';letter-spacing:0.35px">1.475</div>
<div class="t" style="left:-138px;top:394px;width:300px;text-align:right;font-size:12px;font-weight:normal;color:#00004c;font-family:'Liberation Sans';letter-spacing:0.35px">126.789,00</div>
<div class="t" style="left:-45px;top:394px;width:300px;text-align:right;font-size:12px;font-weight:normal;color:#000;font-family:'Liberation Sans';letter-spacing:0.35px">2.087</div>
<div class="t" style="left:62px;top:394px;width:300px;text-align:right;font-size:12px;font-weight:normal;color:#000;font-family:'Liberation Sans';letter-spacing:0.35px">522</div>
<div class="t" style="left:160px;top:394px;width:300px;text-align:right;font-size:12px;font-weight:normal;color:#000;font-family:'Liberation Sans';letter-spacing:0.35px">1.044</div>
<div class="t" style="left:280px;top:394px;width:300px;text-align:right;font-size:12px;font-weight:normal;color:#000;font-family:'Liberation Sans';letter-spacing:0.35px">34.437</div>
<div class="t" style="left:399px;top:394px;width:300px;text-align:right;font-size:12px;font-weight:normal;color:#000;font-family:'Liberation Sans';letter-spacing:0.35px">4.174</div>
<div class="t" style="left:529px;top:394px;width:300px;text-align:right;font-size:12px;font-weight:normal;color:#000;font-family:'Liberation Sans';letter-spacing:0.35px">29.219</div>
<div class="t" style="left:-138px;top:415px;width:300px;text-align:right;font-size:12px;font-weight:normal;color:#00004c;font-family:'Liberation Sans';letter-spacing:0.35px">3.123.058,00</div>
<div class="t" style="left:-45px;top:415px;width:300px;text-align:right;font-size:12px;font-weight:bold;color:#000;font-family:'Liberation Sans';letter-spacing:0.5px">311.853</div>
<div class="t" style="left:62px;top:415px;width:300px;text-align:right;font-size:12px;font-weight:bold;color:#000;font-family:'Liberation Sans';letter-spacing:0.5px">197.287</div>
<div class="t" style="left:160px;top:415px;width:300px;text-align:right;font-size:12px;font-weight:bold;color:#000;font-family:'Liberation Sans';letter-spacing:0.5px">90.526</div>
<div class="t" style="left:280px;top:415px;width:300px;text-align:right;font-size:12px;font-weight:bold;color:#000;font-family:'Liberation Sans';letter-spacing:0.5px">497.015</div>
<div class="t" style="left:399px;top:415px;width:300px;text-align:right;font-size:12px;font-weight:bold;color:#000;font-family:'Liberation Sans';letter-spacing:0.5px">377.063</div>
<div class="t" style="left:529px;top:415px;width:300px;text-align:right;font-size:12px;font-weight:bold;color:#000;font-family:'Liberation Sans';letter-spacing:0.5px">326.856</div>
<div class="t" style="left:636px;top:415px;width:300px;text-align:right;font-size:12px;font-weight:bold;color:#000;font-family:'Liberation Sans';letter-spacing:0.5px">297.063</div>
<div style="left:190px;top:214px;width:3px;height:217px;background:#000"></div>
<div style="left:488px;top:214px;width:3px;height:217px;background:#000"></div>
<div style="left:608px;top:214px;width:3px;height:196px;background:#000"></div>
<div style="left:68px;top:407px;width:1061px;height:3px;background:#000"></div>
<div style="left:68px;top:428px;width:1061px;height:3px;background:#000"></div>
<div class="t" style="left:62px;top:436px;width:300px;text-align:right;font-size:12px;font-weight:normal;color:#000;font-family:'Liberation Sans';letter-spacing:0.35px">3.145</div>
<div style="left:283px;top:428px;width:110px;height:3px;background:#000"></div>
<div style="left:283px;top:449px;width:110px;height:3px;background:#000"></div>
<div style="left:283px;top:428px;width:3px;height:24px;background:#000"></div>
<div style="left:390px;top:428px;width:3px;height:24px;background:#000"></div>
<div class="t" style="left:160px;top:436px;width:300px;text-align:right;font-size:12px;font-weight:normal;color:#000;font-family:'Liberation Sans';letter-spacing:0.35px">1.258</div>
<div style="left:390px;top:428px;width:101px;height:3px;background:#000"></div>
<div style="left:390px;top:449px;width:101px;height:3px;background:#000"></div>
<div style="left:390px;top:428px;width:3px;height:24px;background:#000"></div>
<div style="left:488px;top:428px;width:3px;height:24px;background:#000"></div>
<div class="t" style="left:280px;top:436px;width:300px;text-align:right;font-size:12px;font-weight:normal;color:#000;font-family:'Liberation Sans';letter-spacing:0.35px">6.919</div>
<div style="left:488px;top:428px;width:123px;height:3px;background:#000"></div>
<div style="left:488px;top:449px;width:123px;height:3px;background:#000"></div>
<div style="left:488px;top:428px;width:3px;height:24px;background:#000"></div>
<div style="left:608px;top:428px;width:3px;height:24px;background:#000"></div>
<div class="t" style="left:399px;top:436px;width:300px;text-align:right;font-size:12px;font-weight:normal;color:#000;font-family:'Liberation Sans';letter-spacing:0.35px">88.063</div>
<div style="left:608px;top:428px;width:122px;height:3px;background:#000"></div>
<div style="left:608px;top:449px;width:122px;height:3px;background:#000"></div>
<div style="left:608px;top:428px;width:3px;height:24px;background:#000"></div>
<div style="left:727px;top:428px;width:3px;height:24px;background:#000"></div>
<div class="t" style="left:529px;top:436px;width:300px;text-align:right;font-size:12px;font-weight:normal;color:#000;font-family:'Liberation Sans';letter-spacing:0.35px">69.193</div>
<div style="left:727px;top:428px;width:133px;height:3px;background:#000"></div>
<div style="left:727px;top:449px;width:133px;height:3px;background:#000"></div>
<div style="left:727px;top:428px;width:3px;height:24px;background:#000"></div>
<div style="left:857px;top:428px;width:3px;height:24px;background:#000"></div>
<div class="t" style="left:636px;top:436px;width:300px;text-align:right;font-size:12px;font-weight:normal;color:#000;font-family:'Liberation Sans';letter-spacing:0.35px">30.000</div>
<div style="left:857px;top:428px;width:110px;height:3px;background:#000"></div>
<div style="left:857px;top:449px;width:110px;height:3px;background:#000"></div>
<div style="left:857px;top:428px;width:3px;height:24px;background:#000"></div>
<div style="left:964px;top:428px;width:3px;height:24px;background:#000"></div>
<div class="t" style="left:62px;top:457px;width:300px;text-align:right;font-size:12px;font-weight:normal;color:#000;font-family:'Liberation Sans';letter-spacing:0.35px">200.432</div>
<div style="left:283px;top:449px;width:110px;height:3px;background:#000"></div>
<div style="left:283px;top:470px;width:110px;height:3px;background:#000"></div>
<div style="left:283px;top:449px;width:3px;height:24px;background:#000"></div>
<div style="left:390px;top:449px;width:3px;height:24px;background:#000"></div>
<div class="t" style="left:160px;top:457px;width:300px;text-align:right;font-size:12px;font-weight:normal;color:#000;font-family:'Liberation Sans';letter-spacing:0.35px">91.784</div>
<div style="left:390px;top:449px;width:101px;height:3px;background:#000"></div>
<div style="left:390px;top:470px;width:101px;height:3px;background:#000"></div>
<div style="left:390px;top:449px;width:3px;height:24px;background:#000"></div>
<div style="left:488px;top:449px;width:3px;height:24px;background:#000"></div>
<div class="t" style="left:280px;top:457px;width:300px;text-align:right;font-size:12px;font-weight:normal;color:#000;font-family:'Liberation Sans';letter-spacing:0.35px">503.934</div>
<div style="left:488px;top:449px;width:123px;height:3px;background:#000"></div>
<div style="left:488px;top:470px;width:123px;height:3px;background:#000"></div>
<div style="left:488px;top:449px;width:3px;height:24px;background:#000"></div>
<div style="left:608px;top:449px;width:3px;height:24px;background:#000"></div>
<div class="t" style="left:399px;top:457px;width:300px;text-align:right;font-size:12px;font-weight:normal;color:#000;font-family:'Liberation Sans';letter-spacing:0.35px">465.126</div>
<div style="left:608px;top:449px;width:122px;height:3px;background:#000"></div>
<div style="left:608px;top:470px;width:122px;height:3px;background:#000"></div>
<div style="left:608px;top:449px;width:3px;height:24px;background:#000"></div>
<div style="left:727px;top:449px;width:3px;height:24px;background:#000"></div>
<div class="t" style="left:529px;top:457px;width:300px;text-align:right;font-size:12px;font-weight:normal;color:#000;font-family:'Liberation Sans';letter-spacing:0.35px">396.049</div>
<div style="left:727px;top:449px;width:133px;height:3px;background:#000"></div>
<div style="left:727px;top:470px;width:133px;height:3px;background:#000"></div>
<div style="left:727px;top:449px;width:3px;height:24px;background:#000"></div>
<div style="left:857px;top:449px;width:3px;height:24px;background:#000"></div>
<div class="t" style="left:636px;top:457px;width:300px;text-align:right;font-size:12px;font-weight:normal;color:#000;font-family:'Liberation Sans';letter-spacing:0.35px">300.000</div>
<div style="left:857px;top:449px;width:110px;height:3px;background:#000"></div>
<div style="left:857px;top:470px;width:110px;height:3px;background:#000"></div>
<div style="left:857px;top:449px;width:3px;height:24px;background:#000"></div>
<div style="left:964px;top:449px;width:3px;height:24px;background:#000"></div>
<div class="t" style="left:160px;top:478px;width:300px;text-align:right;font-size:12px;font-weight:normal;color:#000;font-family:'Liberation Sans';letter-spacing:0.35px">1.015</div>
<div style="left:390px;top:470px;width:101px;height:3px;background:#000"></div>
<div style="left:390px;top:491px;width:101px;height:3px;background:#000"></div>
<div style="left:390px;top:470px;width:3px;height:24px;background:#000"></div>
<div style="left:488px;top:470px;width:3px;height:24px;background:#000"></div>
<div class="t" style="left:280px;top:478px;width:300px;text-align:right;font-size:12px;font-weight:normal;color:#000;font-family:'Liberation Sans';letter-spacing:0.35px">2.769</div>
<div style="left:488px;top:470px;width:123px;height:3px;background:#000"></div>
<div style="left:488px;top:491px;width:123px;height:3px;background:#000"></div>
<div style="left:488px;top:470px;width:3px;height:24px;background:#000"></div>
<div style="left:608px;top:470px;width:3px;height:24px;background:#000"></div>
<div class="t" style="left:399px;top:478px;width:300px;text-align:right;font-size:12px;font-weight:normal;color:#000;font-family:'Liberation Sans';letter-spacing:0.35px">73.844</div>
<div style="left:608px;top:470px;width:122px;height:3px;background:#000"></div>
<div style="left:608px;top:491px;width:122px;height:3px;background:#000"></div>
<div style="left:608px;top:470px;width:3px;height:24px;background:#000"></div>
<div style="left:727px;top:470px;width:3px;height:24px;background:#000"></div>
<div class="t" style="left:529px;top:478px;width:300px;text-align:right;font-size:12px;font-weight:normal;color:#000;font-family:'Liberation Sans';letter-spacing:0.35px">59.537</div>
<div style="left:727px;top:470px;width:133px;height:3px;background:#000"></div>
<div style="left:727px;top:491px;width:133px;height:3px;background:#000"></div>
<div style="left:727px;top:470px;width:3px;height:24px;background:#000"></div>
<div style="left:857px;top:470px;width:3px;height:24px;background:#000"></div>
<div class="t" style="left:636px;top:478px;width:300px;text-align:right;font-size:12px;font-weight:normal;color:#000;font-family:'Liberation Sans';letter-spacing:0.35px">30.000</div>
<div style="left:857px;top:470px;width:110px;height:3px;background:#000"></div>
<div style="left:857px;top:491px;width:110px;height:3px;background:#000"></div>
<div style="left:857px;top:470px;width:3px;height:24px;background:#000"></div>
<div style="left:964px;top:470px;width:3px;height:24px;background:#000"></div>
<div class="t" style="left:160px;top:499px;width:300px;text-align:right;font-size:12px;font-weight:normal;color:#000;font-family:'Liberation Sans';letter-spacing:0.35px">92.800</div>
<div style="left:390px;top:491px;width:101px;height:3px;background:#000"></div>
<div style="left:390px;top:512px;width:101px;height:3px;background:#000"></div>
<div style="left:390px;top:491px;width:3px;height:24px;background:#000"></div>
<div style="left:488px;top:491px;width:3px;height:24px;background:#000"></div>
<div class="t" style="left:280px;top:499px;width:300px;text-align:right;font-size:12px;font-weight:normal;color:#000;font-family:'Liberation Sans';letter-spacing:0.35px">506.703</div>
<div style="left:488px;top:491px;width:123px;height:3px;background:#000"></div>
<div style="left:488px;top:512px;width:123px;height:3px;background:#000"></div>
<div style="left:488px;top:491px;width:3px;height:24px;background:#000"></div>
<div style="left:608px;top:491px;width:3px;height:24px;background:#000"></div>
<div class="t" style="left:399px;top:499px;width:300px;text-align:right;font-size:12px;font-weight:normal;color:#000;font-family:'Liberation Sans';letter-spacing:0.35px">538.971</div>
<div style="left:608px;top:491px;width:122px;height:3px;background:#000"></div>
<div style="left:608px;top:512px;width:122px;height:3px;background:#000"></div>
<div style="left:608px;top:491px;width:3px;height:24px;background:#000"></div>
<div style="left:727px;top:491px;width:3px;height:24px;background:#000"></div>
<div class="t" style="left:529px;top:499px;width:300px;text-align:right;font-size:12px;font-weight:normal;color:#000;font-family:'Liberation Sans';letter-spacing:0.35px">455.586</div>
<div style="left:727px;top:491px;width:133px;height:3px;background:#000"></div>
<div style="left:727px;top:512px;width:133px;height:3px;background:#000"></div>
<div style="left:727px;top:491px;width:3px;height:24px;background:#000"></div>
<div style="left:857px;top:491px;width:3px;height:24px;background:#000"></div>
<div class="t" style="left:636px;top:499px;width:300px;text-align:right;font-size:12px;font-weight:normal;color:#000;font-family:'Liberation Sans';letter-spacing:0.35px">300.000</div>
<div style="left:857px;top:491px;width:110px;height:3px;background:#000"></div>
<div style="left:857px;top:512px;width:110px;height:3px;background:#000"></div>
<div style="left:857px;top:491px;width:3px;height:24px;background:#000"></div>
<div style="left:964px;top:491px;width:3px;height:24px;background:#000"></div>
<div class="t" style="left:280px;top:520px;width:300px;text-align:right;font-size:12px;font-weight:normal;color:#000;font-family:'Liberation Sans';letter-spacing:0.35px">10.311</div>
<div style="left:488px;top:512px;width:123px;height:3px;background:#000"></div>
<div style="left:488px;top:533px;width:123px;height:3px;background:#000"></div>
<div style="left:488px;top:512px;width:3px;height:24px;background:#000"></div>
<div style="left:608px;top:512px;width:3px;height:24px;background:#000"></div>
<div class="t" style="left:399px;top:520px;width:300px;text-align:right;font-size:12px;font-weight:normal;color:#000;font-family:'Liberation Sans';letter-spacing:0.35px">12.889</div>
<div style="left:608px;top:512px;width:122px;height:3px;background:#000"></div>
<div style="left:608px;top:533px;width:122px;height:3px;background:#000"></div>
<div style="left:608px;top:512px;width:3px;height:24px;background:#000"></div>
<div style="left:727px;top:512px;width:3px;height:24px;background:#000"></div>
<div class="t" style="left:529px;top:520px;width:300px;text-align:right;font-size:12px;font-weight:normal;color:#000;font-family:'Liberation Sans';letter-spacing:0.35px">15.467</div>
<div style="left:727px;top:512px;width:133px;height:3px;background:#000"></div>
<div style="left:727px;top:533px;width:133px;height:3px;background:#000"></div>
<div style="left:727px;top:512px;width:3px;height:24px;background:#000"></div>
<div style="left:857px;top:512px;width:3px;height:24px;background:#000"></div>
<div class="t" style="left:636px;top:520px;width:300px;text-align:right;font-size:12px;font-weight:normal;color:#000;font-family:'Liberation Sans';letter-spacing:0.35px">30.000</div>
<div style="left:857px;top:512px;width:110px;height:3px;background:#000"></div>
<div style="left:857px;top:533px;width:110px;height:3px;background:#000"></div>
<div style="left:857px;top:512px;width:3px;height:24px;background:#000"></div>
<div style="left:964px;top:512px;width:3px;height:24px;background:#000"></div>
<div class="t" style="left:280px;top:541px;width:300px;text-align:right;font-size:12px;font-weight:normal;color:#000;font-family:'Liberation Sans';letter-spacing:0.35px">517.014</div>
<div style="left:488px;top:533px;width:123px;height:3px;background:#000"></div>
<div style="left:488px;top:554px;width:123px;height:3px;background:#000"></div>
<div style="left:488px;top:533px;width:3px;height:24px;background:#000"></div>
<div style="left:608px;top:533px;width:3px;height:24px;background:#000"></div>
<div class="t" style="left:399px;top:541px;width:300px;text-align:right;font-size:12px;font-weight:normal;color:#000;font-family:'Liberation Sans';letter-spacing:0.35px">551.859</div>
<div style="left:608px;top:533px;width:122px;height:3px;background:#000"></div>
<div style="left:608px;top:554px;width:122px;height:3px;background:#000"></div>
<div style="left:608px;top:533px;width:3px;height:24px;background:#000"></div>
<div style="left:727px;top:533px;width:3px;height:24px;background:#000"></div>
<div class="t" style="left:529px;top:541px;width:300px;text-align:right;font-size:12px;font-weight:normal;color:#000;font-family:'Liberation Sans';letter-spacing:0.35px">471.052</div>
<div style="left:727px;top:533px;width:133px;height:3px;background:#000"></div>
<div style="left:727px;top:554px;width:133px;height:3px;background:#000"></div>
<div style="left:727px;top:533px;width:3px;height:24px;background:#000"></div>
<div style="left:857px;top:533px;width:3px;height:24px;background:#000"></div>
<div class="t" style="left:636px;top:541px;width:300px;text-align:right;font-size:12px;font-weight:normal;color:#000;font-family:'Liberation Sans';letter-spacing:0.35px">300.000</div>
<div style="left:857px;top:533px;width:110px;height:3px;background:#000"></div>
<div style="left:857px;top:554px;width:110px;height:3px;background:#000"></div>
<div style="left:857px;top:533px;width:3px;height:24px;background:#000"></div>
<div style="left:964px;top:533px;width:3px;height:24px;background:#000"></div>
<div class="t" style="left:399px;top:562px;width:300px;text-align:right;font-size:12px;font-weight:normal;color:#000;font-family:'Liberation Sans';letter-spacing:0.35px">227.802</div>
<div style="left:608px;top:554px;width:122px;height:3px;background:#000"></div>
<div style="left:608px;top:575px;width:122px;height:3px;background:#000"></div>
<div style="left:608px;top:554px;width:3px;height:24px;background:#000"></div>
<div style="left:727px;top:554px;width:3px;height:24px;background:#000"></div>
<div class="t" style="left:529px;top:562px;width:300px;text-align:right;font-size:12px;font-weight:normal;color:#000;font-family:'Liberation Sans';letter-spacing:0.35px">96.378</div>
<div style="left:727px;top:554px;width:133px;height:3px;background:#000"></div>
<div style="left:727px;top:575px;width:133px;height:3px;background:#000"></div>
<div style="left:727px;top:554px;width:3px;height:24px;background:#000"></div>
<div style="left:857px;top:554px;width:3px;height:24px;background:#000"></div>
<div class="t" style="left:636px;top:562px;width:300px;text-align:right;font-size:12px;font-weight:normal;color:#000;font-family:'Liberation Sans';letter-spacing:0.35px">30.000</div>
<div style="left:857px;top:554px;width:110px;height:3px;background:#000"></div>
<div style="left:857px;top:575px;width:110px;height:3px;background:#000"></div>
<div style="left:857px;top:554px;width:3px;height:24px;background:#000"></div>
<div style="left:964px;top:554px;width:3px;height:24px;background:#000"></div>
<div class="t" style="left:280px;top:583px;width:300px;text-align:right;font-size:12px;font-weight:normal;color:#000;font-family:'Liberation Sans';letter-spacing:0.35px">517.014</div>
<div style="left:488px;top:575px;width:123px;height:3px;background:#000"></div>
<div style="left:488px;top:596px;width:123px;height:3px;background:#000"></div>
<div style="left:488px;top:575px;width:3px;height:24px;background:#000"></div>
<div style="left:608px;top:575px;width:3px;height:24px;background:#000"></div>
<div class="t" style="left:399px;top:583px;width:300px;text-align:right;font-size:12px;font-weight:normal;color:#000;font-family:'Liberation Sans';letter-spacing:0.35px">779.662</div>
<div style="left:608px;top:575px;width:122px;height:3px;background:#000"></div>
<div style="left:608px;top:596px;width:122px;height:3px;background:#000"></div>
<div style="left:608px;top:575px;width:3px;height:24px;background:#000"></div>
<div style="left:727px;top:575px;width:3px;height:24px;background:#000"></div>
<div class="t" style="left:529px;top:583px;width:300px;text-align:right;font-size:12px;font-weight:normal;color:#000;font-family:'Liberation Sans';letter-spacing:0.35px">567.430</div>
<div style="left:727px;top:575px;width:133px;height:3px;background:#000"></div>
<div style="left:727px;top:596px;width:133px;height:3px;background:#000"></div>
<div style="left:727px;top:575px;width:3px;height:24px;background:#000"></div>
<div style="left:857px;top:575px;width:3px;height:24px;background:#000"></div>
<div class="t" style="left:636px;top:583px;width:300px;text-align:right;font-size:12px;font-weight:normal;color:#000;font-family:'Liberation Sans';letter-spacing:0.35px">300.000</div>
<div style="left:857px;top:575px;width:110px;height:3px;background:#000"></div>
<div style="left:857px;top:596px;width:110px;height:3px;background:#000"></div>
<div style="left:857px;top:575px;width:3px;height:24px;background:#000"></div>
<div style="left:964px;top:575px;width:3px;height:24px;background:#000"></div>
<div class="t" style="left:399px;top:604px;width:300px;text-align:right;font-size:12px;font-weight:normal;color:#000;font-family:'Liberation Sans';letter-spacing:0.35px">111.855</div>
<div style="left:608px;top:596px;width:122px;height:3px;background:#000"></div>
<div style="left:608px;top:617px;width:122px;height:3px;background:#000"></div>
<div style="left:608px;top:596px;width:3px;height:24px;background:#000"></div>
<div style="left:727px;top:596px;width:3px;height:24px;background:#000"></div>
<div class="t" style="left:529px;top:604px;width:300px;text-align:right;font-size:12px;font-weight:normal;color:#000;font-family:'Liberation Sans';letter-spacing:0.35px">175.847</div>
<div style="left:727px;top:596px;width:133px;height:3px;background:#000"></div>
<div style="left:727px;top:617px;width:133px;height:3px;background:#000"></div>
<div style="left:727px;top:596px;width:3px;height:24px;background:#000"></div>
<div style="left:857px;top:596px;width:3px;height:24px;background:#000"></div>
<div class="t" style="left:636px;top:604px;width:300px;text-align:right;font-size:12px;font-weight:normal;color:#000;font-family:'Liberation Sans';letter-spacing:0.35px">30.000</div>
<div style="left:857px;top:596px;width:110px;height:3px;background:#000"></div>
<div style="left:857px;top:617px;width:110px;height:3px;background:#000"></div>
<div style="left:857px;top:596px;width:3px;height:24px;background:#000"></div>
<div style="left:964px;top:596px;width:3px;height:24px;background:#000"></div>
<div class="t" style="left:71px;top:618px;font-size:15px;font-weight:bold;color:#800000;font-family:'Liberation Sans';letter-spacing:0.75px">Gemeinkosten der Hauptkostenstellen</div>
<div class="t" style="left:71px;top:639px;font-size:15px;font-weight:bold;color:#008000;font-family:'Liberation Sans';letter-spacing:0.6px">Einzelkosten (Zuschlagsbasis)</div>
<div class="t" style="left:71px;top:660px;font-size:15px;font-weight:bold;color:#0000cc;font-family:'Liberation Sans';letter-spacing:0.5px">Zuschlagssätze</div>
<div class="t" style="left:514px;top:618px;font-size:15px;font-weight:bold;color:#800000;font-family:'Liberation Sans';letter-spacing:0.5px">517.014</div>
<div class="t" style="left:634px;top:618px;font-size:15px;font-weight:bold;color:#800000;font-family:'Liberation Sans';letter-spacing:0.5px">891.517</div>
<div class="t" style="left:764px;top:618px;font-size:15px;font-weight:bold;color:#800000;font-family:'Liberation Sans';letter-spacing:0.5px">743.277</div>
<div class="t" style="left:871px;top:618px;font-size:15px;font-weight:bold;color:#800000;font-family:'Liberation Sans';letter-spacing:0.5px">477.000</div>
<div class="t" style="left:514px;top:639px;font-size:15px;font-weight:bold;color:#008000;font-family:'Liberation Sans';letter-spacing:0.5px">456.789</div>
<div class="t" style="left:634px;top:639px;font-size:15px;font-weight:bold;color:#008000;font-family:'Liberation Sans';letter-spacing:0.5px">350.550</div>
<div class="t" style="left:764px;top:639px;font-size:15px;font-weight:bold;color:#008000;font-family:'Liberation Sans';letter-spacing:0.5px">237.653</div>
<div class="t" style="left:871px;top:639px;font-size:15px;font-weight:bold;color:#008000;font-family:'Liberation Sans';letter-spacing:0.5px">399.415</div>
<div class="t" style="left:523px;top:660px;font-size:15px;font-weight:bold;color:#0000cc;font-family:'Liberation Sans';letter-spacing:0.5px">113,2%</div>
<div class="t" style="left:641px;top:660px;font-size:15px;font-weight:bold;color:#0000cc;font-family:'Liberation Sans';letter-spacing:0.5px">254,3%</div>
<div class="t" style="left:766px;top:660px;font-size:15px;font-weight:bold;color:#0000cc;font-family:'Liberation Sans';letter-spacing:0.5px">312,8%</div>
<div class="t" style="left:885px;top:660px;font-size:15px;font-weight:bold;color:#0000cc;font-family:'Liberation Sans';letter-spacing:0.5px">119,6%</div>
<div style="left:488px;top:617px;width:123px;height:3px;background:#000"></div>
<div style="left:488px;top:680px;width:123px;height:3px;background:#000"></div>
<div style="left:488px;top:617px;width:3px;height:66px;background:#000"></div>
<div style="left:608px;top:617px;width:3px;height:66px;background:#000"></div>
<div style="left:608px;top:617px;width:122px;height:3px;background:#000"></div>
<div style="left:608px;top:680px;width:122px;height:3px;background:#000"></div>
<div style="left:608px;top:617px;width:3px;height:66px;background:#000"></div>
<div style="left:727px;top:617px;width:3px;height:66px;background:#000"></div>
<div style="left:727px;top:617px;width:133px;height:3px;background:#000"></div>
<div style="left:727px;top:680px;width:133px;height:3px;background:#000"></div>
<div style="left:727px;top:617px;width:3px;height:66px;background:#000"></div>
<div style="left:857px;top:617px;width:3px;height:66px;background:#000"></div>
<div style="left:857px;top:617px;width:110px;height:3px;background:#000"></div>
<div style="left:857px;top:680px;width:110px;height:3px;background:#000"></div>
<div style="left:857px;top:617px;width:3px;height:66px;background:#000"></div>
<div style="left:964px;top:617px;width:3px;height:66px;background:#000"></div>
<div style="left:488px;top:617px;width:479px;height:3px;background:#000"></div>
<div style="left:488px;top:638px;width:479px;height:3px;background:#000"></div>
<div style="left:488px;top:659px;width:479px;height:3px;background:#000"></div>
<div style="left:488px;top:701px;width:372px;height:3px;background:#000"></div>
<div style="left:488px;top:722px;width:372px;height:3px;background:#000"></div>
<div style="left:488px;top:701px;width:3px;height:24px;background:#000"></div>
<div style="left:857px;top:701px;width:3px;height:24px;background:#000"></div>
<div class="t" style="left:492px;top:702px;font-size:15px;font-weight:bold;color:#800080;font-family:'Liberation Sans';letter-spacing:0.75px">Berechnung der Herstellkosten</div>
<div style="left:489px;top:724px;width:1px;height:40px;background:#000"></div>
<div style="left:858px;top:724px;width:1px;height:40px;background:#000"></div>
<div class="t" style="left:491px;top:723px;font-size:15px;font-weight:normal;color:#7a2a7a;font-family:'Liberation Sans';letter-spacing:0.5px">MEK</div>
<div class="t" style="left:491px;top:744px;font-size:15px;font-weight:normal;color:#7a2a7a;font-family:'Liberation Sans';letter-spacing:0.5px">MGK</div>
<div class="t" style="left:730px;top:723px;font-size:15px;font-weight:normal;color:#7a2a7a;font-family:'Liberation Sans';letter-spacing:0.5px">456.789</div>
<div class="t" style="left:730px;top:744px;font-size:15px;font-weight:normal;color:#7a2a7a;font-family:'Liberation Sans';letter-spacing:0.5px">517.014</div>
<div style="left:35px;top:763px;width:1094px;height:16px;background:#d6d6d6"></div>
<div style="left:35px;top:778px;width:1094px;height:1px;background:#000"></div>
<div style="left:35px;top:763px;width:16px;height:15px;background:#d6d6d6"></div>
<div style="left:36px;top:764px;width:1px;height:14px;background:#f8f8f8"></div>
<div style="left:51px;top:763px;width:1px;height:16px;background:#000"></div>
<div style="left:51px;top:763px;width:16px;height:15px;background:#d6d6d6"></div>
<div style="left:52px;top:764px;width:1px;height:14px;background:#f8f8f8"></div>
<div style="left:67px;top:763px;width:1px;height:16px;background:#000"></div>
<div style="left:67px;top:763px;width:16px;height:15px;background:#d6d6d6"></div>
<div style="left:68px;top:764px;width:1px;height:14px;background:#f8f8f8"></div>
<div style="left:83px;top:763px;width:1px;height:16px;background:#000"></div>
<div style="left:83px;top:763px;width:16px;height:15px;background:#d6d6d6"></div>
<div style="left:84px;top:764px;width:1px;height:14px;background:#f8f8f8"></div>
<div style="left:35px;top:763px;width:1px;height:16px;background:#000"></div>
<div style="left:99px;top:763px;width:1px;height:16px;background:#000"></div>
<svg style="position:absolute;left:38px;top:766px;" width="10" height="10" viewBox="0 0 10 10" shape-rendering="crispEdges"><path d="M1 0H2V9H1Z M8 0V9L3 4.5Z" fill="#9a9a9a"/></svg>
<svg style="position:absolute;left:56px;top:766px;" width="10" height="10" viewBox="0 0 10 10" shape-rendering="crispEdges"><path d="M6 0V9L1 4.5Z" fill="#9a9a9a"/></svg>
<svg style="position:absolute;left:72px;top:766px;" width="10" height="10" viewBox="0 0 10 10" shape-rendering="crispEdges"><path d="M2 0V9L7 4.5Z" fill="#000"/></svg>
<svg style="position:absolute;left:87px;top:766px;" width="10" height="10" viewBox="0 0 10 10" shape-rendering="crispEdges"><path d="M1 0V9L6 4.5Z M7 0H8V9H7Z" fill="#000"/></svg>
<svg style="position:absolute;left:100px;top:763px;" width="205" height="16" viewBox="0 0 205 16"></svg>
<svg style="position:absolute;left:100px;top:763px;" width="67" height="16" viewBox="0 0 67 16"><path d="M0.5 0.5 L6 15.5 L61 15.5 L66.5 0.5" fill="#d6d6d6" stroke="#000" stroke-width="1"/></svg>
<svg style="position:absolute;left:239px;top:763px;" width="67" height="16" viewBox="0 0 67 16"><path d="M0.5 0.5 L6 15.5 L61 15.5 L66.5 0.5" fill="#d6d6d6" stroke="#000" stroke-width="1"/></svg>
<svg style="position:absolute;left:183px;top:763px;" width="68" height="16" viewBox="0 0 68 16"><path d="M0.5 0.5 L6 15.5 L62 15.5 L67.5 0.5" fill="#d6d6d6" stroke="#000" stroke-width="1"/></svg>
<svg style="position:absolute;left:156px;top:763px;" width="40" height="16" viewBox="0 0 40 16"><path d="M0.5 0.5 L6 15.5 L34 15.5 L39.5 0.5" fill="#fff" stroke="#000" stroke-width="1"/></svg>
<div style="left:100px;top:763px;width:200px;height:1px;background:#000"></div>
<div style="left:157px;top:763px;width:38px;height:1px;background:#fff"></div>
<div class="t" style="left:110px;top:764px;font-size:12px;font-weight:normal;color:#000;font-family:'Liberation Sans';">Aufgabe</div>
<div class="t" style="left:164px;top:764px;font-size:12px;font-weight:normal;color:#000;font-family:'Liberation Sans';">BAB</div>
<div class="t" style="left:197px;top:764px;font-size:12px;font-weight:normal;color:#000;font-family:'Liberation Sans';">Zeitblatt</div>
<div class="t" style="left:249px;top:764px;font-size:12px;font-weight:normal;color:#000;font-family:'Liberation Sans';width:50px;overflow:hidden">Stückkalk</div>
<div style="left:299px;top:763px;width:1px;height:16px;background:#000"></div>
<div style="left:300px;top:763px;width:5px;height:15px;background:#d6d6d6"></div>
<div style="left:305px;top:763px;width:1px;height:16px;background:#000"></div>
<div style="left:306px;top:763px;width:823px;height:15px;background:#e8e8e8"></div>
<div style="left:306px;top:763px;width:16px;height:15px;background:#d6d6d6"></div>
<div style="left:307px;top:764px;width:1px;height:14px;background:#f8f8f8"></div>
<svg style="position:absolute;left:311px;top:766px;" width="8" height="10" viewBox="0 0 8 10" shape-rendering="crispEdges"><path d="M6 0V9L1 4.5Z" fill="#9a9a9a"/></svg>
<div style="left:321px;top:763px;width:1px;height:16px;background:#000"></div>
<div style="left:322px;top:763px;width:336px;height:15px;background:#d6d6d6"></div>
<div style="left:322px;top:764px;width:336px;height:1px;background:#f8f8f8"></div>
<div style="left:657px;top:763px;width:1px;height:16px;background:#000"></div>
<div style="left:1110px;top:763px;width:16px;height:15px;background:#d6d6d6"></div>
<div style="left:1110px;top:764px;width:1px;height:14px;background:#f8f8f8"></div>
<svg style="position:absolute;left:1115px;top:766px;" width="8" height="10" viewBox="0 0 8 10" shape-rendering="crispEdges"><path d="M1 0V9L6 4.5Z" fill="#000"/></svg>
<div style="left:1125px;top:763px;width:4px;height:16px;background:#000"></div>
<div style="left:1129px;top:762px;width:16px;height:17px;background:#d6d6d6"></div>
<div style="left:10px;top:783px;width:228px;height:18px;background:#d6d6d6"></div>
<div style="left:10px;top:783px;width:228px;height:1px;background:#a8a8a8"></div>
<div style="left:10px;top:783px;width:1px;height:18px;background:#a8a8a8"></div>
<div style="left:10px;top:800px;width:228px;height:1px;background:#f8f8f8"></div>
<div style="left:237px;top:783px;width:1px;height:18px;background:#f8f8f8"></div>
<div class="t" style="left:11px;top:786px;font-size:13px;font-weight:normal;color:#000;font-family:'Liberation Sans';">Tabelle 2 / 15</div>
<div style="left:241px;top:783px;width:272px;height:18px;background:#d6d6d6"></div>
<div style="left:241px;top:783px;width:272px;height:1px;background:#a8a8a8"></div>
<div style="left:241px;top:783px;width:1px;height:18px;background:#a8a8a8"></div>
<div style="left:241px;top:800px;width:272px;height:1px;background:#f8f8f8"></div>
<div style="left:512px;top:783px;width:1px;height:18px;background:#f8f8f8"></div>
<div class="t" style="left:242px;top:786px;font-size:13px;font-weight:normal;color:#000;font-family:'Liberation Sans';">TAB_BAB</div>
<div style="left:517px;top:783px;width:59px;height:18px;background:#d6d6d6"></div>
<div style="left:517px;top:783px;width:59px;height:1px;background:#a8a8a8"></div>
<div style="left:517px;top:783px;width:1px;height:18px;background:#a8a8a8"></div>
<div style="left:517px;top:800px;width:59px;height:1px;background:#f8f8f8"></div>
<div style="left:575px;top:783px;width:1px;height:18px;background:#f8f8f8"></div>
<div class="t" style="left:396px;top:786px;width:300px;text-align:center;font-size:13px;font-weight:normal;color:#000;font-family:'Liberation Sans';">110%</div>
<div style="left:580px;top:783px;width:46px;height:18px;background:#d6d6d6"></div>
<div style="left:580px;top:783px;width:46px;height:1px;background:#a8a8a8"></div>
<div style="left:580px;top:783px;width:1px;height:18px;background:#a8a8a8"></div>
<div style="left:580px;top:800px;width:46px;height:1px;background:#f8f8f8"></div>
<div style="left:625px;top:783px;width:1px;height:18px;background:#f8f8f8"></div>
<div style="left:633px;top:783px;width:35px;height:18px;background:#d6d6d6"></div>
<div style="left:633px;top:783px;width:35px;height:1px;background:#a8a8a8"></div>
<div style="left:633px;top:783px;width:1px;height:18px;background:#a8a8a8"></div>
<div style="left:633px;top:800px;width:35px;height:1px;background:#f8f8f8"></div>
<div style="left:667px;top:783px;width:1px;height:18px;background:#f8f8f8"></div>
<div class="t" style="left:500px;top:786px;width:300px;text-align:center;font-size:13px;font-weight:normal;color:#000;font-family:'Liberation Sans';">STD</div>
<div style="left:673px;top:783px;width:21px;height:18px;background:#d6d6d6"></div>
<div style="left:673px;top:783px;width:21px;height:1px;background:#a8a8a8"></div>
<div style="left:673px;top:783px;width:1px;height:18px;background:#a8a8a8"></div>
<div style="left:673px;top:800px;width:21px;height:1px;background:#f8f8f8"></div>
<div style="left:693px;top:783px;width:1px;height:18px;background:#f8f8f8"></div>
<div style="left:698px;top:783px;width:444px;height:18px;background:#d6d6d6"></div>
<div style="left:698px;top:783px;width:444px;height:1px;background:#a8a8a8"></div>
<div style="left:698px;top:783px;width:1px;height:18px;background:#a8a8a8"></div>
<div style="left:698px;top:800px;width:444px;height:1px;background:#f8f8f8"></div>
<div style="left:1141px;top:783px;width:1px;height:18px;background:#f8f8f8"></div>
<div class="t" style="left:770px;top:786px;width:300px;text-align:center;font-size:13px;font-weight:normal;color:#000;font-family:'Liberation Sans';">Summe=0</div>
<div style="left:893px;top:192px;width:257px;height:453px;background:#a2b6d4"></div>
<div style="left:893px;top:192px;width:257px;height:19px;background:repeating-linear-gradient(to bottom,#b6c6dc 0px,#b6c6dc 2px,#a4b5ce 2px,#a4b5ce 4px)"></div>
<div style="left:893px;top:192px;width:1px;height:453px;background:#8a9cb8"></div>
<svg style="position:absolute;left:898px;top:193px;" width="14" height="15" viewBox="0 0 14 15"><defs><radialGradient id="d905" cx="50%" cy="60%" r="60%"><stop offset="0%" stop-color="#c8d4e4"/><stop offset="100%" stop-color="#a6b6ce"/></radialGradient></defs><ellipse cx="7" cy="7.5" rx="5.8" ry="6.2" fill="url(#d905)" stroke="#8494ae" stroke-width="1"/></svg>
<svg style="position:absolute;left:920px;top:193px;" width="14" height="15" viewBox="0 0 14 15"><defs><radialGradient id="d927" cx="50%" cy="60%" r="60%"><stop offset="0%" stop-color="#c8d4e4"/><stop offset="100%" stop-color="#a6b6ce"/></radialGradient></defs><ellipse cx="7" cy="7.5" rx="5.8" ry="6.2" fill="url(#d927)" stroke="#8494ae" stroke-width="1"/></svg>
<svg style="position:absolute;left:942px;top:193px;" width="14" height="15" viewBox="0 0 14 15"><defs><radialGradient id="d949" cx="50%" cy="60%" r="60%"><stop offset="0%" stop-color="#c8d4e4"/><stop offset="100%" stop-color="#a6b6ce"/></radialGradient></defs><ellipse cx="7" cy="7.5" rx="5.8" ry="6.2" fill="url(#d949)" stroke="#8494ae" stroke-width="1"/></svg>
<svg style="position:absolute;left:1130px;top:193px;" width="14" height="15" viewBox="0 0 14 15"><defs><radialGradient id="d1137" cx="50%" cy="60%" r="60%"><stop offset="0%" stop-color="#c8d4e4"/><stop offset="100%" stop-color="#a6b6ce"/></radialGradient></defs><ellipse cx="7" cy="7.5" rx="5.8" ry="6.2" fill="url(#d1137)" stroke="#8494ae" stroke-width="1"/></svg>
<div class="t" style="left:993px;top:195px;font-size:11.67px;font-weight:normal;color:#5a6a84;font-family:'Liberation Mono';transform:scaleY(1.25);transform-origin:0 11px">Zellvorlagen</div>
<div style="left:898px;top:211px;width:247px;height:429px;background:#d6d6d6"></div>
<div style="left:898px;top:211px;width:247px;height:1px;background:#f4f4f4"></div>
<div style="left:902px;top:240px;width:239px;height:369px;background:#fff"></div>
<div style="left:902px;top:240px;width:239px;height:2px;background:#000"></div>
<div style="left:902px;top:240px;width:2px;height:369px;background:#000"></div>
<div style="left:902px;top:608px;width:239px;height:1px;background:#e8e8e8"></div>
<div style="left:1140px;top:240px;width:1px;height:369px;background:#e8e8e8"></div>
<div class="t" style="left:906px;top:243px;font-size:13px;font-weight:normal;color:#000;font-family:'Liberation Sans';">Ergebnis</div>
<div class="t" style="left:906px;top:259px;font-size:13px;font-weight:normal;color:#000;font-family:'Liberation Sans';">Ergebnis2</div>
<div class="t" style="left:906px;top:275px;font-size:13px;font-weight:normal;color:#000;font-family:'Liberation Sans';">Excel_BuiltIn_Comma</div>
<div class="t" style="left:906px;top:291px;font-size:13px;font-weight:normal;color:#000;font-family:'Liberation Sans';">Excel_BuiltIn_Percent</div>
<div style="left:905px;top:306px;width:52px;height:16px;background:#8c8c8c"></div>
<div class="t" style="left:906px;top:307px;font-size:13px;font-weight:normal;color:#000;font-family:'Liberation Sans';">Standard</div>
<div class="t" style="left:906px;top:323px;font-size:13px;font-weight:normal;color:#000;font-family:'Liberation Sans';">Überschrift</div>
<div class="t" style="left:906px;top:339px;font-size:13px;font-weight:normal;color:#000;font-family:'Liberation Sans';">Überschrift1</div>
<div style="left:902px;top:614px;width:239px;height:22px;background:#fff"></div>
<div style="left:902px;top:614px;width:239px;height:2px;background:#000"></div>
<div style="left:902px;top:614px;width:2px;height:22px;background:#000"></div>
<div style="left:902px;top:635px;width:239px;height:1px;background:#e8e8e8"></div>
<div style="left:1140px;top:614px;width:1px;height:22px;background:#e8e8e8"></div>
<div style="left:1124px;top:616px;width:16px;height:19px;background:#d6d6d6"></div>
<div style="left:1124px;top:616px;width:1px;height:19px;background:#f4f4f4"></div>
<div style="left:1124px;top:634px;width:16px;height:1px;background:#000"></div>
<div style="left:1139px;top:616px;width:1px;height:19px;background:#000"></div>
<svg style="position:absolute;left:1128px;top:623px;" width="8" height="5" viewBox="0 0 8 5" shape-rendering="crispEdges"><path d="M0 0H7L3.5 4Z" fill="#000"/></svg>
<div class="t" style="left:905px;top:619px;font-size:13px;font-weight:normal;color:#000;font-family:'Liberation Sans';">Alle Vorlagen</div>
<div style="left:901px;top:214px;width:23px;height:23px;background:#c8ccd4;border:1px solid #8a96a8;box-sizing:border-box"></div>
<svg style="position:absolute;left:321px;top:48px;" width="17" height="18" viewBox="0 0 17 18" shape-rendering="crispEdges"><rect x="1.5" y="1.5" width="12" height="15" fill="#fff" stroke="#000"/><rect x="1" y="1" width="9" height="1" fill="#888"/><path d="M3 4h3M3 6h3M3 8h3M3 10h3M3 12h3M3 14h3" stroke="#8890a0"/><path d="M7 6h4M7 8h4" stroke="#c0c8d0"/><path d="M6 15L12 9V15Z" fill="#000080"/><path d="M8.5 1H16L12.25 5Z" fill="#20c040" stroke="#000" stroke-width="0.8"/></svg>
<svg style="position:absolute;left:343px;top:49px;" width="18" height="16" viewBox="0 0 18 16" shape-rendering="crispEdges"><path d="M1 4H6L7 5H11V8H4L1 14Z" fill="#ffff90" stroke="#000"/><path d="M1 14L4.5 8H16L12 14Z" fill="#8a9a20" stroke="#000"/><path d="M8 3Q10 0 13 2" stroke="#000" fill="none" stroke-width="1.3"/><path d="M12 1L15 3L12 5Z" fill="#000"/></svg>
<svg style="position:absolute;left:367px;top:50px;" width="16" height="16" viewBox="0 0 16 16" shape-rendering="crispEdges"><rect x="1" y="1" width="13" height="13" fill="#8e8e8e"/><path d="M14 1V15H2" stroke="#fff" fill="none"/><path d="M4 2h1M6 2h1M8 2h1M10 2h1M5 3h1M7 3h1M9 3h1M4 4h1M6 4h1M8 4h1M10 4h1M5 5h1M7 5h1M9 5h1" stroke="#c8c8c8"/></svg>
<svg style="position:absolute;left:394px;top:46px;" width="23" height="23" viewBox="0 0 23 23" shape-rendering="crispEdges"><rect x="0.5" y="0.5" width="22" height="22" fill="#ccd0d8" stroke="#8a949e"/><rect x="4.5" y="6.5" width="9" height="12" fill="#fff" stroke="#000"/><path d="M6 9h6M6 11h2M6 13h6M6 15h2" stroke="#777"/><rect x="8" y="10" width="3" height="3" fill="#000080"/><path d="M11 17L18 9" stroke="#000080" stroke-width="2.4"/><path d="M18 9L19 8" stroke="#000" stroke-width="2"/></svg>
<svg style="position:absolute;left:430px;top:48px;" width="16" height="17" viewBox="0 0 16 17" shape-rendering="crispEdges"><rect x="1.5" y="1.5" width="12" height="15" fill="#fff" stroke="#000"/><path d="M3 4h6M3 6h4M6 6h5M3 8h7M3 10h5" stroke="#2040c0"/><rect x="1" y="12" width="13" height="5" fill="#d82020"/><path d="M3 13v3M6 13v3M9 13v3" stroke="#fff"/><path d="M10 1L14 5V1Z" fill="#d82020"/></svg>
<svg style="position:absolute;left:450px;top:49px;" width="18" height="16" viewBox="0 0 18 16" shape-rendering="crispEdges"><path d="M4 1H14L12 6H2Z" fill="#fff" stroke="#000"/><path d="M5 3h6M5 4.5h5" stroke="#2040b0"/><rect x="1.5" y="6.5" width="15" height="7" rx="2" fill="#fff" stroke="#000"/><path d="M2 9h14" stroke="#000"/><path d="M3 11h12" stroke="#6a6"/><path d="M2 14h14" stroke="#000"/></svg>
<svg style="position:absolute;left:483px;top:49px;" width="13" height="17" viewBox="0 0 13 17" shape-rendering="crispEdges"><path d="M4 1L8 11M9 1L5 11" stroke="#000080" stroke-width="1.3"/><circle cx="4" cy="13" r="2.2" fill="none" stroke="#000080" stroke-width="1.3"/><circle cx="9" cy="13" r="2.2" fill="none" stroke="#000080" stroke-width="1.3"/></svg>
<svg style="position:absolute;left:504px;top:49px;" width="18" height="15" viewBox="0 0 18 15" shape-rendering="crispEdges"><rect x="1.5" y="1.5" width="8" height="9" fill="#fff" stroke="#000040" stroke-width="1.6"/><path d="M3 4h3M3 6h3M3 8h4" stroke="#000"/><rect x="7.5" y="4.5" width="9" height="9" fill="#fff" stroke="#000040" stroke-width="1.6"/><path d="M9 7h3M9 9h5M9 11h5" stroke="#000"/></svg>
<svg style="position:absolute;left:527px;top:49px;" width="18" height="16" viewBox="0 0 18 16" shape-rendering="crispEdges"><rect x="1" y="2" width="12" height="13" rx="2" fill="#8e8e8e"/><rect x="4" y="1" width="6" height="2" fill="#8e8e8e"/><path d="M5 3h5" stroke="#eee"/><rect x="9" y="7" width="7" height="8" fill="#e8e8e8" stroke="#8e8e8e"/><path d="M11 10h3M11 12h3" stroke="#8e8e8e"/></svg>
<svg style="position:absolute;left:558px;top:48px;" width="19" height="17" viewBox="0 0 19 17" shape-rendering="crispEdges"><path d="M5 7H14Q17 7 17 10Q17 13 14 13H5" stroke="#8e8e8e" stroke-width="2" fill="none"/><path d="M1 13L5 10V16Z" fill="#8e8e8e"/><path d="M12 1H18L15 4Z" fill="#8e8e8e"/><path d="M5 8H14M5 12H14" stroke="#f0f0f0" stroke-width="0.6"/></svg>
<svg style="position:absolute;left:581px;top:48px;" width="19" height="17" viewBox="0 0 19 17" shape-rendering="crispEdges"><path d="M14 7H5Q2 7 2 10Q2 13 5 13H12" stroke="#8e8e8e" stroke-width="2" fill="none"/><path d="M16 13L12 10V16Z" fill="#8e8e8e"/><path d="M12 1H18L15 4Z" fill="#8e8e8e"/><path d="M5 8H14M5 12H12" stroke="#f0f0f0" stroke-width="0.6"/></svg>
<svg style="position:absolute;left:612px;top:49px;" width="18" height="17" viewBox="0 0 18 17" shape-rendering="crispEdges"><path d="M9 0L11 6.5L18 8.5L11 10.5L9 17L7 10.5L0 8.5L7 6.5Z" fill="#000"/><path d="M9 3V8M4 8.5H8" stroke="#fff"/><path d="M10 9.5H15M9 10V14" stroke="#303080"/></svg>
<svg style="position:absolute;left:633px;top:46px;" width="23" height="23" viewBox="0 0 23 23" shape-rendering="crispEdges"><rect x="0.5" y="0.5" width="22" height="22" fill="#ccd0d8" stroke="#8a949e"/><path d="M6 8V13M3.5 10.5H8.5" stroke="#8a8a8a" stroke-width="2"/><rect x="3" y="17" width="5" height="3" fill="#000"/><rect x="4" y="15" width="3" height="2" fill="#000"/><rect x="11" y="17" width="5" height="3" fill="#000"/><rect x="12" y="15" width="3" height="2" fill="#000"/><path d="M13 3H21V9H16Z" fill="#ffffa0"/><path d="M10 4L14 9L12 14M14 11L20 5" stroke="#000" stroke-width="1.2" fill="none"/></svg>
<svg style="position:absolute;left:658px;top:49px;" width="17" height="16" viewBox="0 0 17 16" shape-rendering="crispEdges"><rect x="1.5" y="1.5" width="8" height="11" fill="#fff" stroke="#555"/><path d="M3 4h5M3 6h5M3 8h4" stroke="#8888c0"/><circle cx="11" cy="11" r="5" fill="#1a5aa0" stroke="#000"/><path d="M8 9Q11 8 12 11T14 14" stroke="#30a030" stroke-width="2" fill="none"/></svg>
<svg style="position:absolute;left:689px;top:48px;" width="18" height="17" viewBox="0 0 18 17" shape-rendering="crispEdges"><path d="M6 4L9 1L12 4" stroke="#000" fill="none"/><rect x="1" y="4" width="16" height="12" fill="#ffe040" stroke="#000" stroke-width="0.8"/><rect x="3" y="6" width="12" height="8" fill="#40d0e0"/><path d="M3 14V11L15 11V14Z" fill="#30b030"/><path d="M5 11L9 7L13 11" stroke="#d02020" stroke-width="1.5" fill="none"/><rect x="8" y="10" width="2" height="4" fill="#fff"/><path d="M1 15.5H17M16.5 4V16" stroke="#6a2a00" stroke-dasharray="1 1"/></svg>
<svg style="position:absolute;left:290px;top:74px;" width="14" height="26" viewBox="0 0 14 26" shape-rendering="crispEdges"><rect x="0" y="9" width="13" height="1.4" fill="#000"/><rect x="0" y="11" width="9" height="1.4" fill="#000"/><rect x="0" y="13" width="13" height="1.4" fill="#000"/><rect x="0" y="15" width="9" height="1.4" fill="#000"/><rect x="0" y="17" width="13" height="1.4" fill="#000"/></svg>
<svg style="position:absolute;left:313px;top:74px;" width="14" height="26" viewBox="0 0 14 26" shape-rendering="crispEdges"><rect x="0" y="9" width="13" height="1.4" fill="#000"/><rect x="3" y="11" width="7" height="1.4" fill="#000"/><rect x="0" y="13" width="13" height="1.4" fill="#000"/><rect x="3" y="15" width="7" height="1.4" fill="#000"/><rect x="0" y="17" width="13" height="1.4" fill="#000"/></svg>
<svg style="position:absolute;left:336px;top:74px;" width="14" height="26" viewBox="0 0 14 26" shape-rendering="crispEdges"><rect x="0" y="9" width="13" height="1.4" fill="#000"/><rect x="3" y="11" width="10" height="1.4" fill="#000"/><rect x="0" y="13" width="13" height="1.4" fill="#000"/><rect x="3" y="15" width="10" height="1.4" fill="#000"/><rect x="0" y="17" width="13" height="1.4" fill="#000"/></svg>
<svg style="position:absolute;left:359px;top:74px;" width="14" height="26" viewBox="0 0 14 26" shape-rendering="crispEdges"><rect x="0" y="9" width="13" height="1.4" fill="#000"/><rect x="0" y="11" width="13" height="1.4" fill="#000"/><rect x="0" y="13" width="13" height="1.4" fill="#000"/><rect x="0" y="15" width="13" height="1.4" fill="#000"/><rect x="0" y="17" width="13" height="1.4" fill="#000"/></svg>
<svg style="position:absolute;left:390px;top:80px;" width="15" height="13" viewBox="0 0 15 13" shape-rendering="crispEdges"><ellipse cx="4" cy="9" rx="3" ry="1.5" fill="#fff" stroke="#000"/><ellipse cx="8" cy="10" rx="3" ry="1.5" fill="#fff" stroke="#000"/><rect x="9" y="1" width="4" height="9" rx="1.5" fill="#8a9a20" stroke="#000"/><path d="M10 2v7" stroke="#e0e080"/></svg>
<svg style="position:absolute;left:511px;top:79px;" width="18" height="17" viewBox="0 0 18 17" shape-rendering="crispEdges"><path d="M1 8L5 5V11Z" fill="#000080"/><rect x="4" y="7" width="3" height="2" fill="#000080"/><path d="M7.5 0V17" stroke="#000" stroke-dasharray="1 1"/><rect x="8" y="3" width="9" height="1" fill="#000"/><rect x="10" y="5" width="6" height="1" fill="#000"/><rect x="8" y="7" width="9" height="2" fill="#000"/><rect x="10" y="10" width="6" height="1" fill="#000"/><rect x="8" y="12" width="9" height="1" fill="#000"/></svg>
<svg style="position:absolute;left:534px;top:79px;" width="18" height="17" viewBox="0 0 18 17" shape-rendering="crispEdges"><path d="M7 8L3 5V11Z" fill="#000080"/><rect x="1" y="7" width="3" height="2" fill="#000080"/><path d="M7.5 0V17" stroke="#000" stroke-dasharray="1 1"/><rect x="8" y="3" width="9" height="1" fill="#000"/><rect x="10" y="5" width="6" height="1" fill="#000"/><rect x="8" y="7" width="9" height="2" fill="#000"/><rect x="10" y="10" width="6" height="1" fill="#000"/><rect x="8" y="12" width="9" height="1" fill="#000"/></svg>
<svg style="position:absolute;left:566px;top:78px;" width="19" height="16" viewBox="0 0 19 16" shape-rendering="crispEdges"><rect x="2.5" y="5.5" width="10" height="9" fill="none" stroke="#000080" stroke-width="1.3"/><path d="M11 1H18L14.5 5Z" fill="#20c040" stroke="#000" stroke-width="0.6"/></svg>
<svg style="position:absolute;left:588px;top:78px;" width="19" height="18" viewBox="0 0 19 18" shape-rendering="crispEdges"><rect x="1" y="12" width="17" height="5" fill="#fff"/><path d="M1.5 14V4.5H15" stroke="#000080" stroke-width="1.3" fill="none"/><rect x="2" y="7" width="5" height="5" fill="#e070c0"/><path d="M3 8v3M5 8v3" stroke="#fff" stroke-width="0.6"/><path d="M2 5H13" stroke="#b8a0d0" stroke-width="2"/><path d="M11 1H18L14.5 5Z" fill="#20c040" stroke="#000" stroke-width="0.6"/></svg>
<svg style="position:absolute;left:619px;top:78px;" width="17" height="18" viewBox="0 0 17 18" shape-rendering="crispEdges"><rect x="1.5" y="3.5" width="14" height="11" fill="#fff" stroke="#7a7a7a"/><path d="M3 1V17M14 1V17" stroke="#7a7a7a" stroke-dasharray="1 1"/><path d="M3 6H8M3 7.5H7" stroke="#000" stroke-width="1"/><path d="M11.5 6V13" stroke="#000080" stroke-width="1.3"/><path d="M9.5 8L11.5 5.5L13.5 8Z" fill="#000080"/></svg>
<svg style="position:absolute;left:642px;top:78px;" width="17" height="18" viewBox="0 0 17 18" shape-rendering="crispEdges"><rect x="1.5" y="3.5" width="14" height="11" fill="#fff" stroke="#7a7a7a"/><path d="M3 1V17M14 1V17" stroke="#7a7a7a" stroke-dasharray="1 1"/><path d="M3 9H8M3 10.5H7" stroke="#000" stroke-width="1"/><path d="M11.5 6V13" stroke="#000080" stroke-width="1.3"/><path d="M9.5 7.5L11.5 5L13.5 7.5ZM9.5 11.5L11.5 14L13.5 11.5Z" fill="#000080"/></svg>
<svg style="position:absolute;left:665px;top:78px;" width="17" height="18" viewBox="0 0 17 18" shape-rendering="crispEdges"><rect x="1.5" y="3.5" width="14" height="11" fill="#fff" stroke="#7a7a7a"/><path d="M3 1V17M14 1V17" stroke="#7a7a7a" stroke-dasharray="1 1"/><path d="M3 12H8M3 13.5H7" stroke="#000" stroke-width="1"/><path d="M11.5 6V13" stroke="#000080" stroke-width="1.3"/><path d="M9.5 11L11.5 13.5L13.5 11Z" fill="#000080"/></svg>
<svg style="position:absolute;left:162px;top:112px;" width="18" height="12" viewBox="0 0 18 12" shape-rendering="crispEdges"><rect x="1.5" y="2.5" width="14" height="8" fill="#fff" stroke="#000" stroke-width="1.4"/><path d="M3 5h11M3 8h3M8 8h6" stroke="#000"/><path d="M5 3V10M10 3V10" stroke="#000" stroke-dasharray="1 1"/></svg>
<svg style="position:absolute;left:12px;top:139px;" width="18" height="18" viewBox="0 0 18 18" shape-rendering="crispEdges"><rect x="1.5" y="7.5" width="6" height="6" fill="#a04a90" stroke="#000"/><path d="M3 9h1M5 9h1M4 10h1M3 11h1M5 11h1M4 12h1" stroke="#e0a0d0"/><path d="M7.5 6.5Q7.5 4.5 10 4.5H12.5V10.5H10Q8.5 10.5 8.5 12" fill="#ffff80" stroke="#000"/><path d="M2.5 17.5L7.5 12L12.5 17.5Z" fill="#40c0c0" stroke="#000" stroke-width="1"/><path d="M13 2V8L16.5 5Z" fill="#30b050"/><path d="M12.5 2V8" stroke="#000"/></svg>
<svg style="position:absolute;left:12px;top:162px;" width="18" height="18" viewBox="0 0 18 18" shape-rendering="crispEdges"><rect x="1" y="4" width="14" height="13" fill="#000"/><rect x="2" y="5" width="3" height="3" fill="#fff"/><rect x="6" y="5" width="4" height="3" fill="#fff"/><rect x="11" y="5" width="3" height="3" fill="#fff"/><rect x="2" y="9" width="3" height="3" fill="#fff"/><rect x="6" y="9" width="4" height="3" fill="#ffff90"/><rect x="11" y="9" width="3" height="3" fill="#fff"/><rect x="2" y="13" width="3" height="3" fill="#fff"/><rect x="6" y="13" width="4" height="3" fill="#fff"/><rect x="11" y="13" width="3" height="3" fill="#fff"/><path d="M5.5 8.5H10.5V12.5H5.5Z" fill="none" stroke="#1a1a90"/><path d="M13 2V9L16.5 5.5Z" fill="#30b050"/><path d="M12.5 2V9" stroke="#000"/></svg>
<svg style="position:absolute;left:12px;top:186px;" width="18" height="18" viewBox="0 0 18 18" shape-rendering="crispEdges"><circle cx="6" cy="10.5" r="5.5" fill="#ffff80" stroke="#000"/><path d="M6 10.5V5A5.5 5.5 0 0 1 11.5 10.5Z" fill="#40b0c0" stroke="#000" stroke-width="0.8"/><path d="M6 10.5H11.5A5.5 5.5 0 0 1 3 15Z" fill="#a04a90" stroke="#000" stroke-width="0.8"/><path d="M13 1V7L17 4Z" fill="#30b050"/><path d="M12.5 1V7" stroke="#000"/><rect x="15" y="6" width="2" height="2" fill="#000"/></svg>
<svg style="position:absolute;left:12px;top:209px;" width="18" height="18" viewBox="0 0 18 18" shape-rendering="crispEdges"><rect x="1.5" y="8.5" width="8" height="7" fill="#fff" stroke="#000" stroke-width="1.2"/><path d="M4 16L13 7" stroke="#000080" stroke-width="2.6"/><path d="M5 15L12 8" stroke="#6080ff" stroke-width="0.7"/><path d="M13 1V7L17 4Z" fill="#30b050"/><path d="M12.5 1V7" stroke="#000"/></svg>
<svg style="position:absolute;left:12px;top:232px;" width="18" height="18" viewBox="0 0 18 18" shape-rendering="crispEdges"><rect x="2.5" y="3.5" width="11" height="13" fill="#fff" stroke="#000" stroke-width="1.2"/><rect x="2" y="3" width="12" height="2" fill="#000"/><path d="M4 8h5M4 10h3M6 10h6M4 12h8M4 14h8" stroke="#000" stroke-width="1"/><path d="M13 1V8L17 4.5Z" fill="#30b050"/><path d="M12.5 1V8" stroke="#000"/></svg>
<svg style="position:absolute;left:12px;top:263px;" width="18" height="17" viewBox="0 0 18 17" shape-rendering="crispEdges"><rect x="1.5" y="2.5" width="9" height="13" fill="#e8e8e8" stroke="#9a9a9a"/><path d="M3 5h6M3 7h6M3 9h6M3 11h6M3 13h6" stroke="#a8a8a8"/><path d="M13 1V8M9.5 4.5H16.5" stroke="#9a9a9a" stroke-width="1.6"/></svg>
<svg style="position:absolute;left:12px;top:288px;" width="18" height="17" viewBox="0 0 18 17" shape-rendering="crispEdges"><rect x="1.5" y="3.5" width="13" height="12" fill="#fff" stroke="#000060" stroke-width="1.6"/><path d="M4 6V14" stroke="#2040c0" stroke-width="2"/><rect x="8" y="8" width="6" height="6" fill="#ffffd0"/><path d="M8 4L12 1L16 5L12 9Z" fill="#807060" stroke="#000"/></svg>
<svg style="position:absolute;left:12px;top:309px;" width="18" height="17" viewBox="0 0 18 17" shape-rendering="crispEdges"><text x="1" y="8" font-family="Liberation Sans" font-weight="bold" font-size="8" fill="#000">ABC</text><path d="M2 12L5 15L15 9" stroke="#000080" stroke-width="2" fill="none"/></svg>
<svg style="position:absolute;left:12px;top:334px;" width="18" height="16" viewBox="0 0 18 16" shape-rendering="crispEdges"><text x="1" y="8" font-family="Liberation Sans" font-weight="bold" font-size="8" fill="#000">ABC</text><path d="M1 12Q3 10 5 12T9 12T13 12T16 12" stroke="#e04040" stroke-width="1.2" fill="none"/></svg>
<svg style="position:absolute;left:12px;top:357px;" width="18" height="15" viewBox="0 0 18 15" shape-rendering="crispEdges"><rect x="2" y="1" width="3" height="4" fill="#000"/><rect x="9" y="1" width="3" height="4" fill="#000"/><rect x="1" y="4" width="5" height="9" fill="#000"/><rect x="8" y="4" width="5" height="9" fill="#000"/><rect x="5" y="6" width="4" height="4" fill="#000"/><path d="M2.5 6v2M9.5 6v2M2.5 10v1M9.5 10v1M6.5 7v1" stroke="#fff" stroke-width="1"/></svg>
<svg style="position:absolute;left:12px;top:380px;" width="18" height="16" viewBox="0 0 18 16" shape-rendering="crispEdges"><rect x="1.5" y="1.5" width="15" height="13" fill="#fff" stroke="#000" stroke-width="1.2"/><path d="M1 3.5H17M5.5 1V15" stroke="#000" stroke-width="1"/><path d="M3 6v1M3 8v1M3 10v1M3 12v1" stroke="#000"/><path d="M7 6.5H16M7 9H16M7 11.5H16" stroke="#888" stroke-width="0.8"/></svg>
<svg style="position:absolute;left:12px;top:411px;" width="18" height="16" viewBox="0 0 18 16" shape-rendering="crispEdges"><path d="M0.5 6.5H11.5L7.5 10.5V13.5H4.5V10.5Z" fill="#ffffe0" stroke="#000" stroke-width="1.2"/><path d="M2 8h8" stroke="#000" stroke-dasharray="1 1"/><path d="M13 0V6M10 3H16" stroke="#9a9a9a" stroke-width="1.4"/></svg>
<svg style="position:absolute;left:12px;top:432px;" width="18" height="18" viewBox="0 0 18 18" shape-rendering="crispEdges"><text x="0" y="9" font-family="Liberation Sans" font-weight="bold" font-size="11" fill="#000080">A</text><path d="M2.5 9.5L6.5 13.5" stroke="#000080" stroke-width="1.3"/><path d="M4.5 14H8V10.5Z" fill="#000080"/><text x="7.5" y="17.5" font-family="Liberation Sans" font-weight="bold" font-size="10" fill="#000">Z</text></svg>
<svg style="position:absolute;left:12px;top:455px;" width="18" height="18" viewBox="0 0 18 18" shape-rendering="crispEdges"><text x="0.5" y="8.5" font-family="Liberation Sans" font-weight="bold" font-size="10" fill="#000080">Z</text><path d="M2.5 9.5L6.5 13.5" stroke="#000080" stroke-width="1.3"/><path d="M4.5 14H8V10.5Z" fill="#000080"/><text x="7" y="17.5" font-family="Liberation Sans" font-weight="bold" font-size="11" fill="#000">A</text></svg>
<svg style="position:absolute;left:12px;top:487px;" width="18" height="16" viewBox="0 0 18 16" shape-rendering="crispEdges"><rect x="1.5" y="3.5" width="6" height="3" fill="#fff" stroke="#000"/><rect x="8.5" y="3.5" width="7" height="3" fill="#fff" stroke="#000"/><rect x="1.5" y="7.5" width="6" height="3" fill="#fff" stroke="#000"/><rect x="1.5" y="11.5" width="6" height="3" fill="#fff" stroke="#000"/></svg>
<svg style="position:absolute;left:12px;top:511px;" width="18" height="16" viewBox="0 0 18 16" shape-rendering="crispEdges"><rect x="1.5" y="3.5" width="6" height="3" fill="#fff" stroke="#a0a0a0"/><rect x="8.5" y="3.5" width="7" height="3" fill="#fff" stroke="#a0a0a0"/><rect x="1.5" y="7.5" width="6" height="3" fill="#fff" stroke="#a0a0a0"/><rect x="1.5" y="11.5" width="6" height="3" fill="#fff" stroke="#a0a0a0"/><path d="M10 8L15 14M15 8L10 14" stroke="#a0a0a0" stroke-width="2"/></svg>
<svg style="position:absolute;left:904px;top:217px;" width="17" height="17" viewBox="0 0 17 17" shape-rendering="crispEdges"><rect x="2.5" y="1.5" width="12" height="14" fill="#fff" stroke="#000" stroke-width="1.4"/><path d="M1 3h2M1 5h2M1 7h2M1 9h2M1 11h2M1 13h2" stroke="#000"/><path d="M6 5h3M6 9h6M6 12h3" stroke="#a8a870" stroke-width="1.3"/><path d="M9 5h3M9 12h3" stroke="#d8d8b0" stroke-width="1.3"/></svg>
<svg style="position:absolute;left:927px;top:217px;" width="17" height="17" viewBox="0 0 17 17" shape-rendering="crispEdges"><rect x="2.5" y="1.5" width="12" height="14" fill="#fff" stroke="#000" stroke-width="1.4"/><path d="M1 3h2M1 5h2M1 7h2M1 9h2M1 11h2M1 13h2" stroke="#000"/><path d="M5 3.5H10L12.5 6V13.5H5Z" fill="#fff" stroke="#000080"/></svg>
<svg style="position:absolute;left:1074px;top:216px;" width="20" height="19" viewBox="0 0 20 19" shape-rendering="crispEdges"><path d="M2 17Q2 10 8 6" stroke="#000080" stroke-width="2.2" fill="none"/><path d="M8 4L16 8L12 15L5 11Z" fill="#fff" stroke="#000080" stroke-width="1.6"/><path d="M8 7L13 10M7 9L12 12" stroke="#000080" stroke-width="0.8"/><path d="M4 2L7 4" stroke="#000" stroke-width="1.2"/></svg>
<svg style="position:absolute;left:1099px;top:219px;" width="16" height="14" viewBox="0 0 16 14" shape-rendering="crispEdges"><rect x="0" y="2" width="7" height="2" fill="#000"/><rect x="0" y="2" width="3" height="4" fill="#000"/><rect x="3" y="2" width="1" height="9" fill="#000"/><rect x="6" y="2" width="1" height="9" fill="#000"/><rect x="0" y="5" width="7" height="1" fill="#000"/><path d="M9 1.5h5M10 3.5h4M9 5.5h5M10 7.5h4M9 9.5h5M10 11.5h4" stroke="#000080" stroke-width="1"/></svg>
<svg style="position:absolute;left:1122px;top:219px;" width="17" height="14" viewBox="0 0 17 14" shape-rendering="crispEdges"><rect x="0" y="0" width="17" height="13" fill="#000"/><rect x="1" y="3" width="7" height="1" fill="#fff"/><rect x="1" y="3" width="3" height="3" fill="#fff"/><rect x="4" y="3" width="1" height="8" fill="#fff"/><rect x="7" y="3" width="1" height="8" fill="#fff"/><rect x="1" y="6" width="7" height="1" fill="#fff"/><path d="M10 2.5h6M11 4.5h5M10 6.5h6M11 8.5h5M10 10.5h6" stroke="#fff" stroke-width="1"/></svg>
<div class="t" style="left:190px;top:78px;font-size:15px;font-weight:bold;color:#000;font-family:'Liberation Serif';transform:scaleX(1.15);transform-origin:left">F</div>
<div class="t" style="left:216px;top:79px;font-size:14px;font-weight:bold;color:#000;font-family:'Liberation Serif';font-style:italic">k</div>
<div class="t" style="left:237px;top:79px;font-size:14.5px;font-weight:bold;color:#000;font-family:'Liberation Serif';">U</div>
<div style="left:238px;top:92px;width:11px;height:1px;background:#000"></div>
<div class="t" style="left:259px;top:78px;font-size:16px;font-weight:bold;color:#000;font-family:'Liberation Serif';">A</div>
<div style="left:258px;top:91px;width:16px;height:4px;background:#fff;border:1px solid #000;box-sizing:border-box"></div>
<svg style="position:absolute;left:267px;top:79px;" width="8" height="5" viewBox="0 0 8 5" shape-rendering="crispEdges"><path d="M0 0H7L3.5 4Z" fill="#20c040"/></svg>
<div class="t" style="left:414px;top:78px;font-size:15px;font-weight:bold;color:#000;font-family:'Liberation Sans';">%</div>
<svg style="position:absolute;left:459px;top:80px;" width="16" height="15" viewBox="0 0 16 15"><text x="1" y="6" font-family="Liberation Sans" font-size="6.5" fill="#999">0</text><path d="M6 2.5H12.5V6" stroke="#000080" stroke-width="1.2" fill="none"/><path d="M10.5 5.5H14.5L12.5 8Z" fill="#000080"/><text x="0" y="13.5" font-family="Liberation Sans" font-weight="bold" font-size="7.5" fill="#000">.000</text></svg>
<svg style="position:absolute;left:482px;top:80px;" width="16" height="15" viewBox="0 0 16 15"><text x="0" y="6.5" font-family="Liberation Sans" font-weight="bold" font-size="7.5" fill="#000">.00</text><text x="10.5" y="6.5" font-family="Liberation Sans" font-size="7" fill="#999">0</text><text x="1.5" y="13.5" font-family="Liberation Sans" font-weight="bold" font-size="7.5" fill="#000">0</text><path d="M14.5 8.5V11.5H8" stroke="#000080" stroke-width="1.2" fill="none"/><path d="M9 9.5V13.5L6.5 11.5Z" fill="#000080"/></svg>
<svg style="position:absolute;left:434px;top:80px;" width="17" height="15" viewBox="0 0 17 15"><text x="0" y="8" font-family="Liberation Sans" font-weight="bold" font-size="9" fill="#000">$</text><text x="7" y="8" font-family="Liberation Sans" font-weight="bold" font-size="8" fill="#000">%</text><path d="M6 12.5H14" stroke="#000080" stroke-width="1.2"/><path d="M3.5 12.5L7 10V15Z" fill="#000080"/></svg>
<div class="t" style="left:189px;top:110px;font-size:14px;font-weight:bold;color:#000;font-family:'Liberation Serif';">Σ</div>
<div class="t" style="left:211px;top:109px;font-size:14px;font-weight:normal;color:#000;font-family:'Liberation Sans';">=</div>
</body></html>
